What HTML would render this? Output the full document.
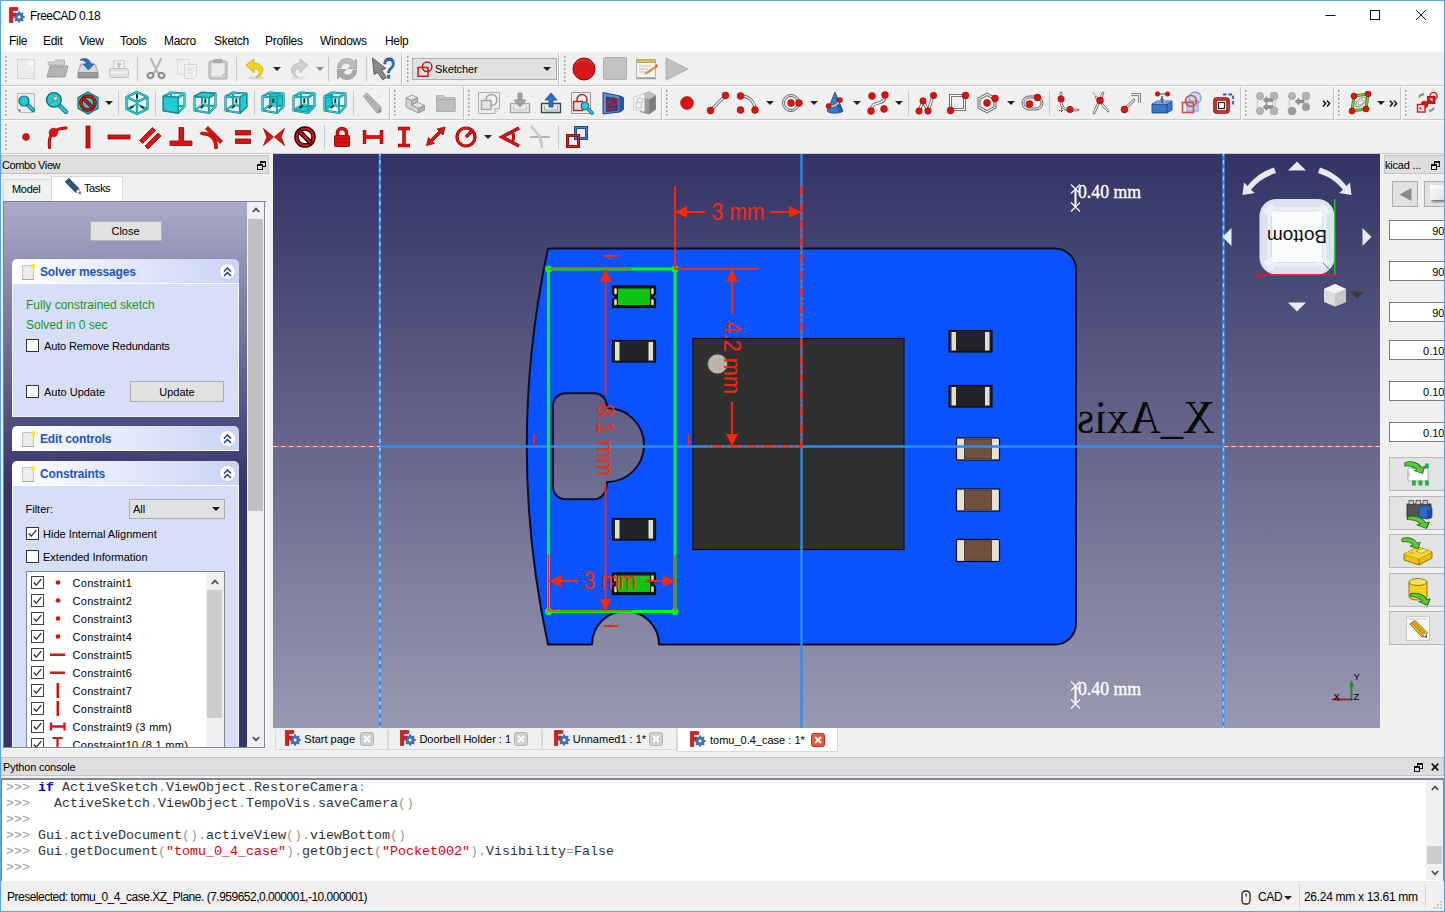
<!DOCTYPE html>
<html>
<head>
<meta charset="utf-8">
<title>FreeCAD 0.18</title>
<style>
*{box-sizing:border-box;margin:0;padding:0}
html,body{width:1445px;height:912px;overflow:hidden;background:#f0f0f0;font-family:"Liberation Sans",sans-serif;font-size:12px;color:#000}
.abs{position:absolute}
#win{position:absolute;left:0;top:0;width:1445px;height:912px;background:#f0f0f0;overflow:hidden}
#frame{position:absolute;left:0;top:0;width:1445px;height:912px;border:1px solid #5aa6ee;pointer-events:none;z-index:50}
#titlebar{position:absolute;left:0;top:0;width:1445px;height:30px;background:#fff}
#titlebar .t{position:absolute;left:30px;top:9px;font-size:12px;line-height:15px;letter-spacing:-0.55px}
#menubar{position:absolute;left:0;top:30px;width:1445px;height:22px;background:#fff}
#menubar span{position:absolute;top:4px;font-size:12px;line-height:15px;letter-spacing:-0.3px}
.tb{position:absolute;left:0;width:1445px;height:34px}
.grip{position:absolute;width:3px;height:27px;background:repeating-linear-gradient(180deg,#a2a2a2 0 2px,transparent 2px 4px) 0 0/1.5px 100% no-repeat,repeating-linear-gradient(180deg,transparent 0 1px,#fff 1px 2.5px,transparent 2.5px 4px) 1px 0/1.5px 100% no-repeat}
.sep{position:absolute;width:1px;height:24px;background:#c8c8c8}
.ic{position:absolute;width:24px;height:24px}
.dd{position:absolute;width:0;height:0;border-left:4px solid transparent;border-right:4px solid transparent;border-top:4px solid #222;margin-left:-0.5px}
/* docks */
.docktitle{position:absolute;background:#dedede;border:1px solid #c4c4c4;font-size:11px;line-height:15px}
.btn{position:absolute;background:#e1e1e1;border:1px solid #adadad;font-size:11px;text-align:center}
.cb{position:absolute;width:13px;height:13px;background:#fff;border:1px solid #333}
.inp{position:absolute;background:#fff;border:1px solid #7a7a7a;font-size:11px;text-align:right}
.t11{position:absolute;font-size:11px;line-height:14px;white-space:nowrap}
.box{position:absolute;left:12px;width:227px}
.boxhead{position:absolute;left:0;top:0;width:227px;height:25px;border-radius:5px 5px 0 0;background:linear-gradient(90deg,#ffffff 0%,#e6ebfb 45%,#c9d3f5 100%);border-bottom:1px solid #fff}
.boxhead b{position:absolute;left:28px;top:5.500px;letter-spacing:-0.15px;font-size:12px;line-height:14px;color:#1c54c8;font-weight:bold;white-space:nowrap}
.boxbody{position:absolute;left:0;top:25px;width:227px;background:#d6dff7;box-shadow:inset 1px 0 #f4f6ff,inset -1px 0 #f4f6ff,inset 0 -1px #f4f6ff}
.fold{position:absolute;right:3px;top:4px;width:17px;height:17px;border-radius:50%;background:#fff;border:1px solid #c6cce4}
.mono{position:absolute;left:6px;font-family:"Liberation Mono",monospace;font-size:13.33px;line-height:16px;white-space:pre;color:#333}
.mono i{font-style:normal;color:#9a9a9a}
.mono u{text-decoration:none;color:#e00000}
.mono b{color:#0000e0}
</style>
</head>
<body>
<div id="win">
<div id="titlebar">
<svg class="abs" style="left:7px;top:7px" width="19" height="17" viewBox="0 0 19 17"><path d="M2.400 0.500h8.400v3.100H5.800v2.700h3.200v2.600H5.800v6.600H2.400z" fill="#e01a1a" stroke="#8a0e0e" stroke-width="0.600" stroke-linejoin="round"/><path d="M12.10 4.30L13.52 6.58L16.13 5.97L15.52 8.58L17.80 10.00L15.52 11.42L16.13 14.03L13.52 13.42L12.10 15.70L10.68 13.42L8.07 14.03L8.68 11.42L6.40 10.00L8.68 8.58L8.07 5.97L10.68 6.58z" fill="#3f73b6" stroke="#234a86" stroke-width="0.600" stroke-linejoin="round"/><circle cx="12.100" cy="10" r="1.500" fill="#fff"/></svg>
<div class="t">FreeCAD 0.18</div>
<svg class="abs" style="left:1320px;top:5px" width="120" height="20" viewBox="0 0 120 20" fill="none" stroke="#111" stroke-width="1">
<path d="M5.5 10.5h10"/><rect x="50.500" y="5.500" width="9" height="9"/><path d="M96 5l10 10M106 5l-10 10"/>
</svg>
</div>

<div id="menubar">
<span style="left:9px">File</span><span style="left:43px">Edit</span><span style="left:79px">View</span><span style="left:120px">Tools</span><span style="left:164px">Macro</span><span style="left:214px">Sketch</span><span style="left:265px">Profiles</span><span style="left:320px">Windows</span><span style="left:385px">Help</span>
</div>

<div class="abs" style="left:0;top:52px;width:1445px;height:102px;background:#f0f0f0"></div>
<div class="abs" style="left:0;top:85px;width:1445px;height:1px;background:#c9c9c9"></div><div class="abs" style="left:0;top:86px;width:1445px;height:1px;background:#fbfbfb"></div>
<div class="abs" style="left:0;top:119px;width:1445px;height:1px;background:#c9c9c9"></div><div class="abs" style="left:0;top:120px;width:1445px;height:1px;background:#fbfbfb"></div>
<div class="abs" style="left:0;top:153px;width:1445px;height:1px;background:#c9c9c9"></div><div class="abs" style="left:0;top:154px;width:1445px;height:1px;background:#fbfbfb"></div>
<div class="grip" style="left:4.5px;top:56px"></div>
<svg class="ic" style="left:14px;top:57px;width:24px;height:24px" viewBox="0 0 24 24"><path d="M3.5 2.500h17v19h-17z" fill="#ececec" stroke="#d6d6d6"/><circle cx="17" cy="6" r="2.5" fill="#fafafa"/></svg>
<svg class="ic" style="left:45px;top:57px;width:24px;height:24px" viewBox="0 0 24 24"><path d="M3 5h6l1.500-2h9v5h-16z" fill="#cfcfcf" stroke="#aaa" stroke-width="0.8"/><path d="M2 20L5 9h18l-3 11z" fill="#b4b4b4" stroke="#909090" stroke-width="0.8"/></svg>
<svg class="ic" style="left:76px;top:57px;width:24px;height:24px" viewBox="0 0 24 24"><path d="M2 15l3-8h14l3 8v6H2z" fill="#d8d8d8" stroke="#8c8c8c" stroke-width="0.8"/><path d="M2.500 15.500h19v5h-19z" fill="#9c9c9c" stroke="#777" stroke-width="0.6"/><path d="M4 3c5-3 10-1 11 4h3l-5.500 6L7 7h3.500C10 4.500 7 3 4 3z" fill="#2b6fc4" stroke="#1b4f94" stroke-width="0.6"/></svg>
<svg class="ic" style="left:107px;top:57px;width:24px;height:24px" viewBox="0 0 24 24"><path d="M6.500 3.500h11v8h-11z" fill="#eee" stroke="#d0d0d0"/><path d="M12 5l3 3h-2v2.500h-2V8H9z" fill="#c4c4c4"/><rect x="2.500" y="11.500" width="19" height="9" rx="2" fill="#e0e0e0" stroke="#c4c4c4"/><path d="M4 15.500h16" stroke="#f8f8f8" stroke-width="1.5"/></svg>
<div class="sep" style="left:137px;top:57px"></div>
<svg class="ic" style="left:144px;top:57px;width:24px;height:24px" viewBox="0 0 24 24"><path d="M7 2l7 14M17 2L10 16" stroke="#b8b8b8" stroke-width="2.2" stroke-linecap="round"/><ellipse cx="6.500" cy="18.500" rx="3" ry="2.600" fill="none" stroke="#8a8a8a" stroke-width="2" transform="rotate(-25 6.500 18.500)"/><ellipse cx="17.500" cy="18.500" rx="3" ry="2.600" fill="none" stroke="#8a8a8a" stroke-width="2" transform="rotate(25 17.500 18.500)"/></svg>
<svg class="ic" style="left:175px;top:57px;width:24px;height:24px" viewBox="0 0 24 24"><path d="M2.500 2.500h12v15h-12z" fill="#efefef" stroke="#d8d8d8"/><path d="M9.500 7.500h12v11l-3 3h-9z" fill="#f1f1f1" stroke="#d4d4d4"/><path d="M12 11h7M12 13.500h7M12 16h6" stroke="#dadada" stroke-width="1.2"/></svg>
<svg class="ic" style="left:206px;top:57px;width:24px;height:24px" viewBox="0 0 24 24"><rect x="3" y="4" width="18" height="18" rx="1.5" fill="#c9c9c9" stroke="#aaa"/><path d="M5.500 6.500h13v13h-13z" fill="#ebebeb"/><path d="M8 2.500h8v3H8z" fill="#b0b0b0" stroke="#999" stroke-width="0.6"/><path d="M18.500 16v3.500H15z" fill="#bbb"/></svg>
<div class="sep" style="left:236px;top:57px"></div>
<svg class="ic" style="left:243px;top:57px;width:24px;height:24px" viewBox="0 0 24 24"><ellipse cx="13" cy="21" rx="8" ry="1.600" fill="#000" opacity="0.10"/><path d="M3 8l8-6v4c7 0 10 5 8 10-1 2.500-3 4-6 4.500 3-2 4-5 2.500-7-1-1.500-2.500-1.800-4.500-1.800v4z" fill="#f2d21e" stroke="#c9a800" stroke-width="0.8" stroke-linejoin="round"/></svg>
<div class="dd" style="left:273.5px;top:67px;border-top-color:#222"></div>
<svg class="ic" style="left:287px;top:57px;width:24px;height:24px" viewBox="0 0 24 24"><ellipse cx="11" cy="21" rx="8" ry="1.600" fill="#000" opacity="0.06"/><path d="M21 8l-8-6v4c-7 0-10 5-8 10 1 2.500 3 4 6 4.500-3-2-4-5-2.500-7 1-1.500 2.500-1.800 4.500-1.800v4z" fill="#cfcfcf" stroke="#b8b8b8" stroke-width="0.8" stroke-linejoin="round"/></svg>
<div class="dd" style="left:316.5px;top:67px;border-top-color:#8a8a8a"></div>
<div class="sep" style="left:328px;top:57px"></div>
<svg class="ic" style="left:335px;top:57px;width:24px;height:24px" viewBox="0 0 24 24"><path d="M2.500 11C2.500 5 7 1.500 12 1.500c3 0 5.500 1 7 3L21.500 2v9.500H13l2.800-2.800C14.800 7 13 6 11.500 6 8 6 6.500 8 6 11z" fill="#bcbcbc" stroke="#9c9c9c" stroke-width="0.7" stroke-linejoin="round"/><path d="M2.500 11C2.500 5 7 1.500 12 1.500c3 0 5.500 1 7 3L21.500 2v9.500H13l2.800-2.800C14.800 7 13 6 11.500 6 8 6 6.500 8 6 11z" fill="#a8a8a8" stroke="#909090" stroke-width="0.7" stroke-linejoin="round" transform="rotate(180 12 12)"/></svg>
<div class="sep" style="left:366px;top:57px"></div>
<svg class="ic" style="left:371px;top:56px;width:26px;height:26px" viewBox="0 0 24 24"><path d="M1.500 2l1.600 16.700 3.400-2.200 5.200 7.200 3.600-2-4.600-8 4.200-1.200z" fill="#878a85" stroke="#555753" stroke-width="0.9" stroke-linejoin="round" transform="scale(0.923)"/><text transform="translate(10.800 20.600) scale(0.740 1)" font-family="Liberation Sans,sans-serif" font-size="27.500" fill="#3b78c2" stroke="#1c3f78" stroke-width="0.7">?</text></svg>
<div class="abs" style="left:401px;top:53px;width:1px;height:33px;background:#c4c4c4"></div><div class="abs" style="left:402px;top:53px;width:1px;height:33px;background:#fff"></div>
<div class="grip" style="left:406.5px;top:56px"></div>
<div class="abs" style="left:412px;top:58px;width:145px;height:22px;background:#e1e1e1;border:1px solid #adadad"></div>
<svg class="abs" style="left:416px;top:61px" width="18" height="17" viewBox="0 0 18 17"><circle cx="11.100" cy="5.800" r="4.800" fill="none" stroke="#d01818" stroke-width="1.500"/><rect x="2" y="6.500" width="10" height="8.800" fill="none" stroke="#d01818" stroke-width="1.500"/></svg>
<div class="t11" style="left:435px;top:62px;font-size:11px;letter-spacing:-0.1px">Sketcher</div>
<div class="dd" style="left:543.5px;top:67px;border-top-color:#222"></div>
<div class="abs" style="left:558px;top:53px;width:1px;height:33px;background:#c4c4c4"></div><div class="abs" style="left:559px;top:53px;width:1px;height:33px;background:#fff"></div>
<div class="grip" style="left:563.5px;top:56px"></div>
<svg class="ic" style="left:572px;top:57px;width:24px;height:24px" viewBox="0 0 24 24"><circle cx="12" cy="12" r="11" fill="#d81818" stroke="#7c0c0c" stroke-width="1"/><path d="M4 8a9 9 0 0 1 16 0" fill="none" stroke="#f05050" stroke-width="1.5" opacity="0.5"/></svg>
<svg class="ic" style="left:603px;top:57px;width:24px;height:24px" viewBox="0 0 24 24"><rect x="0.500" y="0.500" width="23" height="22" rx="1" fill="#c2c2c2" stroke="#b0b0b0"/></svg>
<svg class="ic" style="left:633.5px;top:57px;width:24px;height:24px" viewBox="0 0 24 24"><path d="M2.500 4.500h19v16h-19z" fill="#f4f4f2" stroke="#b8b8b4"/><path d="M2.500 2.500h19v3h-19z" fill="#d6c060" stroke="#a89030" stroke-width="0.6"/><path d="M2 21.500h20" stroke="#a0a0a0" stroke-width="1.5"/><path d="M5 9h12M5 12h9M5 15h7" stroke="#c4c4c4"/><path d="M22.500 8.500l-9 6-3 2.500 3.800-1.200 9-6z" fill="#f0a020" stroke="#a86010" stroke-width="0.6"/><path d="M21.500 8l1.500 2 1-0.700-1.300-2z" fill="#d44"/></svg>
<svg class="ic" style="left:665px;top:57px;width:24px;height:24px" viewBox="0 0 24 24"><path d="M1 1l22 11L1 23z" fill="#c0c0c0" stroke="#aeaeae"/></svg>
<div class="grip" style="left:4.5px;top:89.5px"></div>
<svg class="ic" style="left:14px;top:90.5px;width:24px;height:24px" viewBox="0 0 24 24"><path d="M3.500 2.500h17v19h-14l-3-3z" fill="#ededed" stroke="#b9b9b9"/><path d="M3.500 18.500h3v3z" fill="#666"/><path d="M12 12l7 7" stroke="#0b6e76" stroke-width="4" stroke-linecap="round"/><path d="M12 12l7 7" stroke="#22ccd4" stroke-width="2.4" stroke-linecap="round"/><circle cx="10" cy="10" r="5" fill="#22ccd4" stroke="#0b6e76" stroke-width="1.2"/></svg>
<svg class="ic" style="left:44px;top:90px;width:25px;height:25px" viewBox="0 0 24 24"><path d="M13 13l8 8" stroke="#0b6e76" stroke-width="4.200" stroke-linecap="round"/><path d="M13 13l8 8" stroke="#22ccd4" stroke-width="2.600" stroke-linecap="round"/><circle cx="9.500" cy="9.500" r="7" fill="#22ccd4" stroke="#0b6e76" stroke-width="1.3"/><path d="M5 14l5-5-2.500-1 6-2.500-2 6-1-2.300-5 5z" fill="#eee" stroke="#666" stroke-width="0.6"/></svg>
<svg class="ic" style="left:75.5px;top:90.5px;width:24px;height:24px" viewBox="0 0 24 24"><path d="M12 1l10 5.500v11L12 23 2 17.500v-11z" fill="#22ccd4" stroke="#0b6e76" stroke-width="1.2"/><circle cx="12" cy="12" r="7" fill="none" stroke="#4a0000" stroke-width="3.400"/><circle cx="12" cy="12" r="7" fill="none" stroke="#d81010" stroke-width="2.200"/><path d="M7 7l10 10" stroke="#4a0000" stroke-width="3.400"/><path d="M7.300 7.300l9.400 9.400" stroke="#d81010" stroke-width="2.200"/></svg>
<div class="dd" style="left:105.5px;top:100.5px;border-top-color:#222"></div>
<div class="sep" style="left:118px;top:90.5px"></div>
<svg class="ic" style="left:124.5px;top:90.5px;width:24px;height:24px" viewBox="0 0 24 24"><path d="M12 1v12M12 13L1.500 18M12 13l10.500 5" fill="none" stroke="#17a8b0" stroke-width="1.600" stroke-linejoin="round"/><path d="M12 1v12M12 13L1.500 18M12 13l10.500 5" fill="none" stroke="#2cd6de" stroke-width="0.900" stroke-linejoin="round"/><path d="M12 4v2.500M5.500 17l2.500-1.500M18.500 17l-2.500-1.500" stroke="#0c2a2c" stroke-width="2" stroke-linecap="round"/><path d="M12 1l10.500 5v12L12 23 1.500 18V6zM1.500 6L12 11l10.500-5M12 11v12" fill="none" stroke="#0b6e76" stroke-width="2.200" stroke-linejoin="round"/><path d="M12 1l10.500 5v12L12 23 1.500 18V6zM1.500 6L12 11l10.500-5M12 11v12" fill="none" stroke="#2cd6de" stroke-width="1.200" stroke-linejoin="round"/></svg>
<div class="sep" style="left:155px;top:90.5px"></div>
<svg class="ic" style="left:161.5px;top:90.5px;width:24px;height:24px" viewBox="0 0 24 24"><path d="M9 1.5L22.5 2.5L22.5 15.5L9 14zM1.5 5.5L9 1.5M16 6.5L22.5 2.5M16 22L22.5 15.5M1.5 19.5L9 14" fill="none" stroke="#0b6e76" stroke-width="2.100" stroke-linejoin="round"/><path d="M9 1.5L22.5 2.5L22.5 15.5L9 14zM1.5 5.5L9 1.5M16 6.5L22.5 2.5M16 22L22.5 15.5M1.5 19.5L9 14" fill="none" stroke="#2cd6de" stroke-width="1.100" stroke-linejoin="round"/><path d="M1.5 5.5L16 6.5L16 22L1.5 19.5z" fill="none" stroke="#0b6e76" stroke-width="2.100" stroke-linejoin="round"/><path d="M1.5 5.5L16 6.5L16 22L1.5 19.5z" fill="none" stroke="#2cd6de" stroke-width="1.100" stroke-linejoin="round"/><path d="M1.5 5.5L16 6.5L16 22L1.5 19.5z" fill="#22ccd4" stroke="#0b6e76" stroke-width="0.700" stroke-linejoin="round"/></svg>
<svg class="ic" style="left:192.5px;top:90.5px;width:24px;height:24px" viewBox="0 0 24 24"><path d="M9 1.5L22.5 2.5L22.5 15.5L9 14zM1.5 5.5L9 1.5M16 6.5L22.5 2.5M16 22L22.5 15.5M1.5 19.5L9 14" fill="none" stroke="#0b6e76" stroke-width="2.100" stroke-linejoin="round"/><path d="M9 1.5L22.5 2.5L22.5 15.5L9 14zM1.5 5.5L9 1.5M16 6.5L22.5 2.5M16 22L22.5 15.5M1.5 19.5L9 14" fill="none" stroke="#2cd6de" stroke-width="1.100" stroke-linejoin="round"/><path d="M10.500 14.500L8.300 16.700" stroke="#0c2a2c" stroke-width="1.900" stroke-linecap="round"/><path d="M12.300 11.500V8.500" stroke="#0c2a2c" stroke-width="1.900" stroke-linecap="round"/><path d="M12.300 12.500l-1.500 1.500M12.500 12.800l3.500 1.700" stroke="#35d8e0" stroke-width="1.200" stroke-linecap="round"/><path d="M1.5 5.5L16 6.5L16 22L1.5 19.5z" fill="none" stroke="#0b6e76" stroke-width="2.100" stroke-linejoin="round"/><path d="M1.5 5.5L16 6.5L16 22L1.5 19.5z" fill="none" stroke="#2cd6de" stroke-width="1.100" stroke-linejoin="round"/><path d="M1.5 5.5L9 1.5L22.5 2.5L16 6.5z" fill="#22ccd4" stroke="#0b6e76" stroke-width="0.700" stroke-linejoin="round"/></svg>
<svg class="ic" style="left:223.5px;top:90.5px;width:24px;height:24px" viewBox="0 0 24 24"><path d="M9 1.5L22.5 2.5L22.5 15.5L9 14zM1.5 5.5L9 1.5M16 6.5L22.5 2.5M16 22L22.5 15.5M1.5 19.5L9 14" fill="none" stroke="#0b6e76" stroke-width="2.100" stroke-linejoin="round"/><path d="M9 1.5L22.5 2.5L22.5 15.5L9 14zM1.5 5.5L9 1.5M16 6.5L22.5 2.5M16 22L22.5 15.5M1.5 19.5L9 14" fill="none" stroke="#2cd6de" stroke-width="1.100" stroke-linejoin="round"/><path d="M10.500 14.500L8.300 16.700" stroke="#0c2a2c" stroke-width="1.900" stroke-linecap="round"/><path d="M12.300 11.500V8.500" stroke="#0c2a2c" stroke-width="1.900" stroke-linecap="round"/><path d="M12.300 12.500l-1.500 1.500M12.500 12.800l3.500 1.700" stroke="#35d8e0" stroke-width="1.200" stroke-linecap="round"/><path d="M1.5 5.5L16 6.5L16 22L1.5 19.5z" fill="none" stroke="#0b6e76" stroke-width="2.100" stroke-linejoin="round"/><path d="M1.5 5.5L16 6.5L16 22L1.5 19.5z" fill="none" stroke="#2cd6de" stroke-width="1.100" stroke-linejoin="round"/><path d="M16 6.5L22.5 2.5L22.5 15.5L16 22z" fill="#22ccd4" stroke="#0b6e76" stroke-width="0.700" stroke-linejoin="round"/></svg>
<div class="sep" style="left:254px;top:90.5px"></div>
<svg class="ic" style="left:260.5px;top:90.5px;width:24px;height:24px" viewBox="0 0 24 24"><path d="M9 1.5L22.5 2.5L22.5 15.5L9 14z" fill="#1fc4cc"/><path d="M9 1.5L22.5 2.5L22.5 15.5L9 14zM1.5 5.5L9 1.5M16 6.5L22.5 2.5M16 22L22.5 15.5M1.5 19.5L9 14" fill="none" stroke="#0b6e76" stroke-width="2.100" stroke-linejoin="round"/><path d="M9 1.5L22.5 2.5L22.5 15.5L9 14zM1.5 5.5L9 1.5M16 6.5L22.5 2.5M16 22L22.5 15.5M1.5 19.5L9 14" fill="none" stroke="#2cd6de" stroke-width="1.100" stroke-linejoin="round"/><path d="M10.500 14.500L8.300 16.700" stroke="#0c2a2c" stroke-width="1.900" stroke-linecap="round"/><path d="M12.300 11.500V8.500" stroke="#0c2a2c" stroke-width="1.900" stroke-linecap="round"/><path d="M12.300 12.500l-1.500 1.500M12.500 12.800l3.500 1.700" stroke="#35d8e0" stroke-width="1.200" stroke-linecap="round"/><path d="M1.5 5.5L16 6.5L16 22L1.5 19.5z" fill="none" stroke="#0b6e76" stroke-width="2.100" stroke-linejoin="round"/><path d="M1.5 5.5L16 6.5L16 22L1.5 19.5z" fill="none" stroke="#2cd6de" stroke-width="1.100" stroke-linejoin="round"/></svg>
<svg class="ic" style="left:291.5px;top:90.5px;width:24px;height:24px" viewBox="0 0 24 24"><path d="M1.5 19.5L9 14L22.5 15.5L16 22z" fill="#1fc4cc"/><path d="M9 1.5L22.5 2.5L22.5 15.5L9 14zM1.5 5.5L9 1.5M16 6.5L22.5 2.5M16 22L22.5 15.5M1.5 19.5L9 14" fill="none" stroke="#0b6e76" stroke-width="2.100" stroke-linejoin="round"/><path d="M9 1.5L22.5 2.5L22.5 15.5L9 14zM1.5 5.5L9 1.5M16 6.5L22.5 2.5M16 22L22.5 15.5M1.5 19.5L9 14" fill="none" stroke="#2cd6de" stroke-width="1.100" stroke-linejoin="round"/><path d="M10.500 14.500L8.300 16.700" stroke="#0c2a2c" stroke-width="1.900" stroke-linecap="round"/><path d="M12.300 11.500V8.500" stroke="#0c2a2c" stroke-width="1.900" stroke-linecap="round"/><path d="M12.300 12.500l-1.500 1.500M12.500 12.800l3.500 1.700" stroke="#35d8e0" stroke-width="1.200" stroke-linecap="round"/><path d="M1.5 5.5L16 6.5L16 22L1.5 19.5z" fill="none" stroke="#0b6e76" stroke-width="2.100" stroke-linejoin="round"/><path d="M1.5 5.5L16 6.5L16 22L1.5 19.5z" fill="none" stroke="#2cd6de" stroke-width="1.100" stroke-linejoin="round"/></svg>
<svg class="ic" style="left:322.5px;top:90.5px;width:24px;height:24px" viewBox="0 0 24 24"><path d="M1.5 5.5L9 1.5L9 14L1.5 19.5z" fill="#1fc4cc"/><path d="M9 1.5L22.5 2.5L22.5 15.5L9 14zM1.5 5.5L9 1.5M16 6.5L22.5 2.5M16 22L22.5 15.5M1.5 19.5L9 14" fill="none" stroke="#0b6e76" stroke-width="2.100" stroke-linejoin="round"/><path d="M9 1.5L22.5 2.5L22.5 15.5L9 14zM1.5 5.5L9 1.5M16 6.5L22.5 2.5M16 22L22.5 15.5M1.5 19.5L9 14" fill="none" stroke="#2cd6de" stroke-width="1.100" stroke-linejoin="round"/><path d="M10.500 14.500L8.300 16.700" stroke="#0c2a2c" stroke-width="1.900" stroke-linecap="round"/><path d="M12.300 11.500V8.500" stroke="#0c2a2c" stroke-width="1.900" stroke-linecap="round"/><path d="M12.300 12.500l-1.500 1.500M12.500 12.800l3.500 1.700" stroke="#35d8e0" stroke-width="1.200" stroke-linecap="round"/><path d="M1.5 5.5L16 6.5L16 22L1.5 19.5z" fill="none" stroke="#0b6e76" stroke-width="2.100" stroke-linejoin="round"/><path d="M1.5 5.5L16 6.5L16 22L1.5 19.5z" fill="none" stroke="#2cd6de" stroke-width="1.100" stroke-linejoin="round"/></svg>
<div class="sep" style="left:353px;top:90.5px"></div>
<svg class="ic" style="left:359px;top:90.5px;width:24px;height:24px" viewBox="0 0 24 24"><path d="M4 5l4-3 14 14v5l-4 1z" fill="#b4b4b4" stroke="#9a9a9a" stroke-width="0.7"/><path d="M18 22l4-1v-5" fill="#8e8e8e"/><path d="M9 5l-1.500 1.500M11.500 7.500L10 9M14 10l-1.500 1.500M16.500 12.500L15 14" stroke="#888" stroke-width="0.9"/></svg>
<div class="abs" style="left:389px;top:87px;width:1px;height:33px;background:#c4c4c4"></div><div class="abs" style="left:390px;top:87px;width:1px;height:33px;background:#fff"></div>
<div class="grip" style="left:393.5px;top:89.5px"></div>
<svg class="ic" style="left:402.5px;top:90.5px;width:24px;height:24px" viewBox="0 0 24 24"><g stroke="#8c8c8c" stroke-width="0.8" stroke-linejoin="round"><path d="M3 7l6-3 5.500 2.500-6 3z" fill="#e6e6e6"/><path d="M8.500 9.500l6-3V11l-6 3z" fill="#bdbdbd"/><path d="M8.500 14l6-3 7 3.500-6 3z" fill="#e0e0e0"/><path d="M3 7l5.500 2.500V14l7 3.500V22L3 16z" fill="#d2d2d2"/><path d="M15.500 17.500l6-3V19l-6 3z" fill="#b0b0b0"/></g></svg>
<svg class="ic" style="left:434px;top:90.5px;width:24px;height:24px" viewBox="0 0 24 24"><path d="M2.500 4.500h7l1.500 2h10v14h-18.500z" fill="#c2c2c2" stroke="#b0b0b0"/><path d="M2.500 8.500h18.500v12h-18.500z" fill="#bdbdbd" stroke="#adadad"/></svg>
<div class="abs" style="left:463px;top:87px;width:1px;height:33px;background:#c4c4c4"></div><div class="abs" style="left:464px;top:87px;width:1px;height:33px;background:#fff"></div>
<div class="grip" style="left:467.5px;top:89.5px"></div>
<svg class="ic" style="left:476.5px;top:90.5px;width:24px;height:24px" viewBox="0 0 24 24"><path d="M1.500 1.500h21v16l-4.500 5h-16.500z" fill="#efefef" stroke="#b0b0b0"/><path d="M18 22.500v-5h4.500" fill="#dcdcdc" stroke="#b0b0b0"/><circle cx="14.500" cy="9" r="5.500" fill="#f0f0f0" stroke="#a0a0a0" stroke-width="1.400"/><rect x="4.500" y="9.500" width="9.500" height="9" fill="#e2e2e2" stroke="#a0a0a0" stroke-width="1.400"/></svg>
<svg class="ic" style="left:507.5px;top:90.5px;width:24px;height:24px" viewBox="0 0 24 24"><path d="M2.500 12.500h19v9h-19z" fill="#eaeaea" stroke="#a8a8a8" stroke-width="1.4"/><path d="M5.500 15v4h13v-4" fill="none" stroke="#c4c4c4"/><path d="M10 2h4v7h4l-6 7-6-7h4z" fill="#a2a2a2" stroke="#8a8a8a" stroke-width="0.7"/></svg>
<svg class="ic" style="left:538.5px;top:90.5px;width:24px;height:24px" viewBox="0 0 24 24"><path d="M2.500 12.500h19v9h-19z" fill="#eaeaea" stroke="#3a4a52" stroke-width="1.4"/><path d="M5.500 15v4h13v-4" fill="none" stroke="#9aa"/><path d="M10 16h4V9h4l-6-7-6 7h4z" fill="#2c72c8" stroke="#184a8c" stroke-width="0.8"/></svg>
<svg class="ic" style="left:570px;top:90.5px;width:24px;height:24px" viewBox="0 0 24 24"><path d="M1.500 1.500h19v21h-19z" fill="#f4f4f4" stroke="#999"/><circle cx="12" cy="8.500" r="5" fill="none" stroke="#d01818" stroke-width="1.4"/><rect x="3.500" y="10.500" width="9" height="9" fill="#e0e0e0" stroke="#d01818" stroke-width="1.4"/><path d="M17 17l5 5" stroke="#0b6e76" stroke-width="3.600" stroke-linecap="round"/><path d="M17 17l5 5" stroke="#22ccd4" stroke-width="2" stroke-linecap="round"/><circle cx="15" cy="15" r="4" fill="#22ccd4" stroke="#0b6e76" stroke-width="1"/></svg>
<svg class="ic" style="left:601px;top:90.5px;width:24px;height:24px" viewBox="0 0 24 24"><path d="M2 1.500l17 3.500v16L2 23z" fill="#5b8dd6" stroke="#1c3c74" stroke-width="0.9" stroke-linejoin="round"/><path d="M19 5l3.500 1.500v12L19 21z" fill="#2a5aa4" stroke="#1c3c74" stroke-width="0.8"/><path d="M5.500 6l11 2v11.500l-11 1z" fill="#1f4484" stroke="#16305e" stroke-width="0.7"/><path d="M16.500 8l2.500 1v9.500l-2.500 1z" fill="#3d6fbc"/><circle cx="12" cy="10.500" r="3.800" fill="none" stroke="#d81818" stroke-width="1.300"/><rect x="6" y="11.500" width="6.500" height="6.500" fill="none" stroke="#d81818" stroke-width="1.300" transform="skewY(3) translate(0 -0.500)"/></svg>
<svg class="ic" style="left:631.5px;top:90.5px;width:24px;height:24px" viewBox="0 0 24 24"><path d="M8 4.500l9-3.500 6.500 3.500v14L17 23l-9-2.500z" fill="#9a9a9a" stroke="#7e7e7e" stroke-width="0.700" stroke-linejoin="round"/><path d="M17 8.500l6.500-4v14L17 23z" fill="#7c7c7c"/><path d="M8 4.500l9 4 6.500-4L17 1z" fill="#c2c2c2"/><path d="M1.500 6l11-3v17.500l-11-2z" fill="#f3f3f3" stroke="#cacaca" stroke-width="0.800"/><circle cx="8" cy="9.500" r="2.800" fill="none" stroke="#c4c4c4" stroke-width="1.100"/><rect x="4" y="11.500" width="5.500" height="5.500" fill="#f3f3f3" stroke="#c4c4c4" stroke-width="1.100"/></svg>
<div class="abs" style="left:661px;top:87px;width:1px;height:33px;background:#c4c4c4"></div><div class="abs" style="left:662px;top:87px;width:1px;height:33px;background:#fff"></div>
<div class="grip" style="left:665.5px;top:89.5px"></div>
<svg class="ic" style="left:675px;top:90.5px;width:24px;height:24px" viewBox="0 0 24 24"><circle cx="12" cy="12" r="6.4" fill="#e01010" stroke="#8a0606" stroke-width="0.6"/></svg>
<svg class="ic" style="left:706px;top:90.5px;width:24px;height:24px" viewBox="0 0 24 24"><path d="M5 19L19 5" fill="none" stroke="#555" stroke-width="3.0" stroke-linecap="round" stroke-linejoin="round"/><path d="M5 19L19 5" fill="none" stroke="#f4f4f4" stroke-width="1.6" stroke-linecap="round" stroke-linejoin="round"/><circle cx="4.5" cy="19.5" r="3.4" fill="#e01010" stroke="#8a0606" stroke-width="0.6"/><circle cx="19.5" cy="4.5" r="3.4" fill="#e01010" stroke="#8a0606" stroke-width="0.6"/></svg>
<svg class="ic" style="left:736px;top:90.5px;width:24px;height:24px" viewBox="0 0 24 24"><path d="M5 5C13 5 19 11 19 19" fill="none" stroke="#555" stroke-width="3.0" stroke-linecap="round" stroke-linejoin="round"/><path d="M5 5C13 5 19 11 19 19" fill="none" stroke="#f4f4f4" stroke-width="1.6" stroke-linecap="round" stroke-linejoin="round"/><circle cx="4.5" cy="5" r="3.4" fill="#e01010" stroke="#8a0606" stroke-width="0.6"/><circle cx="4.5" cy="19" r="3.4" fill="#e01010" stroke="#8a0606" stroke-width="0.6"/><circle cx="19" cy="19" r="3.4" fill="#e01010" stroke="#8a0606" stroke-width="0.6"/></svg>
<div class="dd" style="left:766.5px;top:100.5px;border-top-color:#222"></div>
<svg class="ic" style="left:781px;top:90.5px;width:24px;height:24px" viewBox="0 0 24 24"><circle cx="10" cy="12" r="8.500" fill="none" stroke="#555" stroke-width="0.9"/><circle cx="10" cy="12" r="6.500" fill="none" stroke="#555" stroke-width="0.9"/><circle cx="10" cy="12" r="3.4" fill="#e01010" stroke="#8a0606" stroke-width="0.6"/><circle cx="18" cy="12" r="3.4" fill="#e01010" stroke="#8a0606" stroke-width="0.6"/></svg>
<div class="dd" style="left:810px;top:100.5px;border-top-color:#222"></div>
<svg class="ic" style="left:823px;top:90.5px;width:24px;height:24px" viewBox="0 0 24 24"><path d="M12 1L4 20c2 3 14 3 16 0z" fill="#3a78c8" stroke="#1c4a8c" stroke-width="0.8"/><path d="M12 1l3 20c3-.5 4.500-.8 5-1z" fill="#2a5ea8"/><path d="M6 15c5 1 9-2 11-6" fill="none" stroke="#555" stroke-width="2.6" stroke-linecap="round" stroke-linejoin="round"/><path d="M6 15c5 1 9-2 11-6" fill="none" stroke="#f4f4f4" stroke-width="1.2000000000000002" stroke-linecap="round" stroke-linejoin="round"/><circle cx="5.5" cy="15" r="2.5" fill="#e01010" stroke="#8a0606" stroke-width="0.6"/><circle cx="17" cy="9" r="2.5" fill="#e01010" stroke="#8a0606" stroke-width="0.6"/></svg>
<div class="dd" style="left:853px;top:100.5px;border-top-color:#222"></div>
<svg class="ic" style="left:866px;top:90.5px;width:24px;height:24px" viewBox="0 0 24 24"><path d="M5 20c0-12 14-4 14-15" fill="none" stroke="#555" stroke-width="3.0" stroke-linecap="round" stroke-linejoin="round"/><path d="M5 20c0-12 14-4 14-15" fill="none" stroke="#f4f4f4" stroke-width="1.6" stroke-linecap="round" stroke-linejoin="round"/><circle cx="6" cy="5" r="3.4" fill="#e01010" stroke="#8a0606" stroke-width="0.6"/><circle cx="19" cy="4" r="3.4" fill="#e01010" stroke="#8a0606" stroke-width="0.6"/><circle cx="5" cy="20" r="3.4" fill="#e01010" stroke="#8a0606" stroke-width="0.6"/><circle cx="18" cy="18" r="3.4" fill="#e01010" stroke="#8a0606" stroke-width="0.6"/></svg>
<div class="dd" style="left:895.5px;top:100.5px;border-top-color:#222"></div>
<div class="sep" style="left:908px;top:90.5px"></div>
<svg class="ic" style="left:915px;top:90.5px;width:24px;height:24px" viewBox="0 0 24 24"><path d="M4 20L8 10l5 10 5-15" fill="none" stroke="#555" stroke-width="3.0" stroke-linecap="round" stroke-linejoin="round"/><path d="M4 20L8 10l5 10 5-15" fill="none" stroke="#f4f4f4" stroke-width="1.6" stroke-linecap="round" stroke-linejoin="round"/><circle cx="4" cy="20" r="3.2" fill="#e01010" stroke="#8a0606" stroke-width="0.6"/><circle cx="8" cy="10" r="3.2" fill="#e01010" stroke="#8a0606" stroke-width="0.6"/><circle cx="13" cy="20" r="3.2" fill="#e01010" stroke="#8a0606" stroke-width="0.6"/><circle cx="18.5" cy="4.5" r="3.2" fill="#e01010" stroke="#8a0606" stroke-width="0.6"/></svg>
<svg class="ic" style="left:946px;top:90.5px;width:24px;height:24px" viewBox="0 0 24 24"><path d="M4.500 4.500h14v14h-14z" fill="none" stroke="#555" stroke-width="3"/><path d="M4.500 4.500h14v14h-14z" fill="none" stroke="#f4f4f4" stroke-width="1.400"/><circle cx="4.5" cy="19.5" r="3.4" fill="#e01010" stroke="#8a0606" stroke-width="0.6"/><circle cx="19.5" cy="4.5" r="3.4" fill="#e01010" stroke="#8a0606" stroke-width="0.6"/></svg>
<svg class="ic" style="left:977px;top:90.5px;width:24px;height:24px" viewBox="0 0 24 24"><path d="M10 2l9 5v10l-9 5-9-5V7z" fill="none" stroke="#555" stroke-width="0.9"/><path d="M10 4.500l7 3.800v7.400l-7 3.800-7-3.800V8.300z" fill="none" stroke="#555" stroke-width="0.9"/><circle cx="10" cy="12" r="3.4" fill="#e01010" stroke="#8a0606" stroke-width="0.6"/><circle cx="18" cy="7.5" r="3.4" fill="#e01010" stroke="#8a0606" stroke-width="0.6"/></svg>
<div class="dd" style="left:1007px;top:100.5px;border-top-color:#222"></div>
<svg class="ic" style="left:1019.5px;top:90.5px;width:24px;height:24px" viewBox="0 0 24 24"><rect x="2" y="5" width="21" height="14" rx="7" fill="none" stroke="#555" stroke-width="0.9"/><rect x="4" y="7" width="17" height="10" rx="5" fill="none" stroke="#555" stroke-width="0.9"/><circle cx="9.5" cy="13" r="3.4" fill="#e01010" stroke="#8a0606" stroke-width="0.6"/><circle cx="17.5" cy="6.5" r="3.4" fill="#e01010" stroke="#8a0606" stroke-width="0.6"/></svg>
<div class="sep" style="left:1049px;top:90.5px"></div>
<svg class="ic" style="left:1056px;top:90.5px;width:24px;height:24px" viewBox="0 0 24 24"><path d="M5 2v8c0 6 4 9 9 9h8" fill="none" stroke="#555" stroke-width="2.6" stroke-linecap="round" stroke-linejoin="round"/><path d="M5 2v8c0 6 4 9 9 9h8" fill="none" stroke="#f4f4f4" stroke-width="1.2000000000000002" stroke-linecap="round" stroke-linejoin="round"/><path d="M3 19.500h5M5.500 17v5" stroke="#444" stroke-width="0.9" stroke-dasharray="1.500 1"/><circle cx="5" cy="8" r="3.2" fill="#e01010" stroke="#8a0606" stroke-width="0.6"/><circle cx="14" cy="18.5" r="3.2" fill="#e01010" stroke="#8a0606" stroke-width="0.6"/></svg>
<svg class="ic" style="left:1087px;top:90.5px;width:24px;height:24px" viewBox="0 0 24 24"><path d="M16 2L7 22" fill="none" stroke="#555" stroke-width="2.6" stroke-linecap="round" stroke-linejoin="round"/><path d="M16 2L7 22" fill="none" stroke="#f4f4f4" stroke-width="1.2000000000000002" stroke-linecap="round" stroke-linejoin="round"/><path d="M9 6L21 20" fill="none" stroke="#555" stroke-width="2.6" stroke-linecap="round" stroke-linejoin="round"/><path d="M9 6L21 20" fill="none" stroke="#f4f4f4" stroke-width="1.2000000000000002" stroke-linecap="round" stroke-linejoin="round"/><path d="M6 1.500l2 2.500" stroke="#555" stroke-width="1" stroke-dasharray="1.500 1"/><circle cx="13" cy="9.5" r="3.4" fill="#e01010" stroke="#8a0606" stroke-width="0.6"/></svg>
<svg class="ic" style="left:1119px;top:90.5px;width:24px;height:24px" viewBox="0 0 24 24"><path d="M8 16l7-7" fill="none" stroke="#555" stroke-width="2.6" stroke-linecap="round" stroke-linejoin="round"/><path d="M8 16l7-7" fill="none" stroke="#f4f4f4" stroke-width="1.2000000000000002" stroke-linecap="round" stroke-linejoin="round"/><path d="M12 3.500h8.500V12" fill="none" stroke="#666" stroke-width="2.800"/><path d="M12 3.500h8.500V12" fill="none" stroke="#f4f4f4" stroke-width="1.300"/><circle cx="5.5" cy="18.5" r="3.4" fill="#e01010" stroke="#8a0606" stroke-width="0.6"/></svg>
<svg class="ic" style="left:1149.5px;top:90.5px;width:24px;height:24px" viewBox="0 0 24 24"><path d="M2 13l5-3h15v9l-5 3H2z" fill="#3a78c8" stroke="#173e78" stroke-width="0.8"/><path d="M2 13h15v9M17 13l5-3" fill="none" stroke="#173e78" stroke-width="0.8"/><path d="M2 13l5-3h15l-5 3z" fill="#6aa0e0"/><path d="M12 12V5M8 3h9" stroke="#444" stroke-width="1.200"/><path d="M12 6l-2 3h4z" fill="#2a5ea8"/><circle cx="7.5" cy="3" r="2.2" fill="#e01010" stroke="#8a0606" stroke-width="0.6"/><circle cx="17.5" cy="3" r="2.2" fill="#e01010" stroke="#8a0606" stroke-width="0.6"/></svg>
<svg class="ic" style="left:1180px;top:90.5px;width:24px;height:24px" viewBox="0 0 24 24"><circle cx="15" cy="7" r="6" fill="#c8d8f8" stroke="#7a9ae8" stroke-width="1.300" opacity="0.9"/><rect x="7" y="10" width="11" height="10" fill="#b0c8f4" stroke="#7a9ae8" stroke-width="1.300" opacity="0.8"/><circle cx="11" cy="10" r="5.500" fill="none" stroke="#d05050" stroke-width="1.600"/><rect x="2.500" y="11.500" width="11" height="10" fill="none" stroke="#d05050" stroke-width="1.600"/></svg>
<svg class="ic" style="left:1212px;top:90.5px;width:24px;height:24px" viewBox="0 0 24 24"><path d="M11 3.500h10v10" fill="none" stroke="#2a5aa8" stroke-width="1.800" stroke-dasharray="3.500 2"/><rect x="3" y="8" width="13" height="13" rx="2" fill="#fff" stroke="#8a0a0a" stroke-width="3.600"/><rect x="3" y="8" width="13" height="13" rx="2" fill="none" stroke="#d03030" stroke-width="1.800"/><rect x="6.500" y="11.500" width="6" height="6" fill="#fff" stroke="#222" stroke-width="1.200"/></svg>
<div class="abs" style="left:1240px;top:87px;width:1px;height:33px;background:#c4c4c4"></div><div class="abs" style="left:1241px;top:87px;width:1px;height:33px;background:#fff"></div>
<div class="grip" style="left:1244.5px;top:89.5px"></div>
<svg class="ic" style="left:1255px;top:90.5px;width:24px;height:24px" viewBox="0 0 24 24"><path d="M4.500 6c-3 4-3 9 0 13M18 6v13M20.500 6v13" fill="none" stroke="#c8c8c8" stroke-width="1.100"/><path d="M16 9h-6v-2l-4 3.500 4 3.500v-2h6zM16 16h-6v-2l-4 3.500 4 3.500v-2h6z" fill="#909090" stroke="#7c7c7c" stroke-width="0.500" transform="translate(2 -1.500)"/><g fill="#b4b4b4" stroke="#9c9c9c" stroke-width="0.700"><circle cx="5" cy="5" r="3.600"/><circle cx="5" cy="20" r="3.600"/><rect x="15.500" y="1.500" width="7" height="7" rx="2"/><rect x="15.500" y="16.500" width="7" height="7" rx="2"/></g></svg>
<svg class="ic" style="left:1286.5px;top:90.5px;width:24px;height:24px" viewBox="0 0 24 24"><path d="M4.500 6c-3 4-3 9 0 13M18 6v10M20.500 6v10" fill="none" stroke="#c8c8c8" stroke-width="1.100"/><path d="M16 9h-5v-2l-4 3.500 4 3.500v-2h5z" fill="#909090" stroke="#7c7c7c" stroke-width="0.500" transform="translate(1 0)"/><g stroke="#9c9c9c" stroke-width="0.700"><circle cx="5" cy="5" r="3.600" fill="#b4b4b4"/><circle cx="5" cy="20" r="4" fill="#9a9a9a"/><rect x="15.500" y="1.500" width="7" height="7" rx="2" fill="#b4b4b4"/><circle cx="19" cy="16" r="3.800" fill="#9a9a9a"/></g></svg>
<svg class="abs" style="left:1321.5px;top:99.5px" width="9" height="7.200" viewBox="0 0 10 8" fill="none" stroke="#111" stroke-width="1.600"><path d="M1 0.800l3 3.200-3 3.200M5.500 0.800l3 3.200-3 3.200"/></svg>
<div class="abs" style="left:1333px;top:87px;width:1px;height:33px;background:#c4c4c4"></div><div class="abs" style="left:1334px;top:87px;width:1px;height:33px;background:#fff"></div>
<div class="grip" style="left:1337.5px;top:89.5px"></div>
<svg class="ic" style="left:1347.5px;top:90.5px;width:24px;height:24px" viewBox="0 0 24 24"><path d="M6 5l14-2-2 15-14 2z" fill="#e4e4e4" stroke="#3a8a10" stroke-width="3"/><path d="M6 5l14-2-2 15-14 2z" fill="none" stroke="#7ad030" stroke-width="1.400"/><path d="M8 15.500c-1.500-4 5-10.500 9.500-8.500 1.500 3-4 10-9.500 8.500z" fill="#fff" stroke="#6a6a6a" stroke-width="0.800"/><path d="M10 14c-0.500-2.500 3.500-6 6-5 0.500 2-3 5.500-6 5z" fill="#f8f8f8" stroke="#808080" stroke-width="0.700"/><circle cx="6" cy="5" r="3" fill="#e01010" stroke="#8a0606" stroke-width="0.6"/><circle cx="20" cy="3" r="3" fill="#e01010" stroke="#8a0606" stroke-width="0.6"/><circle cx="18" cy="18" r="3" fill="#e01010" stroke="#8a0606" stroke-width="0.6"/><circle cx="4" cy="20" r="3" fill="#e01010" stroke="#8a0606" stroke-width="0.6"/></svg>
<div class="dd" style="left:1377px;top:100.5px;border-top-color:#222"></div>
<svg class="abs" style="left:1389px;top:99.5px" width="9" height="7.200" viewBox="0 0 10 8" fill="none" stroke="#111" stroke-width="1.600"><path d="M1 0.800l3 3.200-3 3.200M5.500 0.800l3 3.200-3 3.200"/></svg>
<div class="abs" style="left:1400px;top:87px;width:1px;height:33px;background:#c4c4c4"></div><div class="abs" style="left:1401px;top:87px;width:1px;height:33px;background:#fff"></div>
<div class="grip" style="left:1404.5px;top:89.5px"></div>
<svg class="ic" style="left:1414px;top:90.5px;width:24px;height:24px" viewBox="0 0 24 24"><path d="M5 6.500c0.500-2 2-3 4-3l-0.500-1.500M20 16.500c-0.500 2-2 3-4 3l0.500 1.500" fill="none" stroke="#8a8a8a" stroke-width="1.800"/><circle cx="19.500" cy="5" r="3.600" fill="#f4d8d8" stroke="#d01818" stroke-width="1.300"/><rect x="13.500" y="5.500" width="7.500" height="7" fill="#d01818" stroke="#a00000" stroke-width="0.800"/><path d="M15.500 7.500h3v3z" fill="#fff"/><circle cx="10.500" cy="13.500" r="3.800" fill="#d01818"/><rect x="3.500" y="13.500" width="7.500" height="7.500" fill="#f8ecec" stroke="#d01818" stroke-width="1.400"/><path d="M5.500 15.500h3v3z" fill="#d01818" transform="rotate(180 7 17)"/></svg>
<div class="grip" style="left:4.5px;top:123.5px"></div>
<svg class="ic" style="left:14px;top:124.5px;width:24px;height:24px" viewBox="0 0 24 24"><circle cx="12" cy="12" r="3.4" fill="#e01010" stroke="#8a0606" stroke-width="0.6"/></svg>
<svg class="ic" style="left:45px;top:124.5px;width:24px;height:24px" viewBox="0 0 24 24"><path d="M4.500 22.500C3 10 8 3.500 21 3" fill="none" stroke="#8a0606" stroke-width="3" stroke-linecap="round"/><path d="M4.500 22.500C3 10 8 3.500 21 3" fill="none" stroke="#e01010" stroke-width="2" stroke-linecap="round"/><circle cx="8.5" cy="7.5" r="4.3" fill="#e01010" stroke="#8a0606" stroke-width="0.6"/></svg>
<svg class="ic" style="left:76px;top:124.5px;width:24px;height:24px" viewBox="0 0 24 24"><rect x="10" y="1" width="4" height="22" fill="#e01010" stroke="#8a0606" stroke-width="0.8"/></svg>
<svg class="ic" style="left:107px;top:124.5px;width:24px;height:24px" viewBox="0 0 24 24"><rect x="1" y="10" width="22" height="4" fill="#e01010" stroke="#8a0606" stroke-width="0.8"/></svg>
<svg class="ic" style="left:138px;top:124.5px;width:24px;height:24px" viewBox="0 0 24 24"><path d="M1.500 15.500L14.500 2.500l3 3L4.500 18.500zM7 21L20 8l3 3L10 24z" fill="#e01010" stroke="#8a0606" stroke-width="0.8"/></svg>
<svg class="ic" style="left:169px;top:124.5px;width:24px;height:24px" viewBox="0 0 24 24"><path d="M10 2.500h4.500V16H23v4.500H1V16h9z" fill="#e01010" stroke="#8a0606" stroke-width="0.8"/></svg>
<svg class="ic" style="left:200px;top:124.5px;width:24px;height:24px" viewBox="0 0 24 24"><path d="M8 1.500l14.500 14.500-2.500 2.500L5.500 4z" fill="#e01010" stroke="#8a0606" stroke-width="0.8"/><path d="M2 8.500c9 0 14 5 14 14" fill="none" stroke="#8a0606" stroke-width="3.600" stroke-linecap="round"/><path d="M2 8.500c9 0 14 5 14 14" fill="none" stroke="#e01010" stroke-width="2.600" stroke-linecap="round"/></svg>
<svg class="ic" style="left:231px;top:124.5px;width:24px;height:24px" viewBox="0 0 24 24"><path d="M4.500 5.500h15v4.500h-15zM4.500 14h15v4.500h-15z" fill="#e01010" stroke="#8a0606" stroke-width="0.8"/></svg>
<svg class="ic" style="left:262px;top:124.5px;width:24px;height:24px" viewBox="0 0 24 24"><path d="M1.500 3.500l10 8.500-10 8.500 3.500-8.500zM22.500 3.500l-10 8.500 10 8.500-3.500-8.500z" fill="#e01010" stroke="#8a0606" stroke-width="0.8" stroke-linejoin="round"/></svg>
<svg class="ic" style="left:292.5px;top:124.5px;width:24px;height:24px" viewBox="0 0 24 24"><circle cx="12" cy="12" r="8.500" fill="#fff" stroke="#1a0000" stroke-width="4.600"/><circle cx="12" cy="12" r="8.500" fill="none" stroke="#d81010" stroke-width="2.200"/><path d="M6 6l12 12" stroke="#1a0000" stroke-width="4.600"/><path d="M6.500 6.500l11 11" stroke="#d81010" stroke-width="2.200"/></svg>
<div class="sep" style="left:324px;top:124.5px"></div>
<svg class="ic" style="left:329.5px;top:124.5px;width:24px;height:24px" viewBox="0 0 24 24"><path d="M7.500 11V8a4.500 4.500 0 0 1 9 0v3" fill="none" stroke="#8a0606" stroke-width="3.400"/><path d="M7.500 11V8a4.500 4.500 0 0 1 9 0v3" fill="none" stroke="#e01010" stroke-width="2.200"/><rect x="4.500" y="10.500" width="15" height="11" rx="1" fill="#e01010" stroke="#8a0606" stroke-width="0.9"/><path d="M5.500 14h13M5.500 17.500h13" stroke="#8a0606" stroke-width="0.8" opacity="0.7"/></svg>
<svg class="ic" style="left:360.5px;top:124.5px;width:24px;height:24px" viewBox="0 0 24 24"><path d="M3.500 5v14M20.500 5v14M3.500 12h17" fill="none" stroke="#8a0606" stroke-width="3.400"/><path d="M3.500 5.500v13M20.500 5.500v13M3.500 12h17" fill="none" stroke="#e01010" stroke-width="2.300"/></svg>
<svg class="ic" style="left:391.5px;top:124.5px;width:24px;height:24px" viewBox="0 0 24 24"><path d="M6 3.500h12M6 20.500h12M12 3.500v17" fill="none" stroke="#8a0606" stroke-width="3.400"/><path d="M6.500 3.500h11M6.500 20.500h11M12 3.500v17" fill="none" stroke="#e01010" stroke-width="2.300"/></svg>
<svg class="ic" style="left:423px;top:124.5px;width:24px;height:24px" viewBox="0 0 24 24"><path d="M22 2l-2 8-2-2-8.500 8.500 2 2-8 2 2-8 2 2L16 6l-2-2z" fill="#e01010" stroke="#8a0606" stroke-width="0.8" stroke-linejoin="round"/></svg>
<svg class="ic" style="left:454px;top:124.5px;width:24px;height:24px" viewBox="0 0 24 24"><circle cx="12" cy="12" r="9" fill="none" stroke="#8a0606" stroke-width="3.200"/><circle cx="12" cy="12" r="9" fill="none" stroke="#e01010" stroke-width="2"/><path d="M12 12l6-6" stroke="#8a0606" stroke-width="3.200"/><path d="M12 12l5.600-5.600" stroke="#e01010" stroke-width="2"/></svg>
<div class="dd" style="left:484px;top:134.5px;border-top-color:#222"></div>
<svg class="ic" style="left:497.5px;top:124.5px;width:24px;height:24px" viewBox="0 0 24 24"><path d="M21 3L4 12l17 9" fill="none" stroke="#8a0606" stroke-width="3.400" stroke-linejoin="miter"/><path d="M21 3L4 12l17 9" fill="none" stroke="#e01010" stroke-width="2.200"/><path d="M14 6.500c2 3 2 8 0 11" fill="none" stroke="#8a0606" stroke-width="3"/><path d="M14 6.500c2 3 2 8 0 11" fill="none" stroke="#e01010" stroke-width="1.800"/></svg>
<svg class="ic" style="left:528px;top:124.5px;width:24px;height:24px" viewBox="0 0 24 24"><path d="M2 12h20" stroke="#b4b4b4" stroke-width="2"/><path d="M4 2l8 10 2 10" fill="none" stroke="#c8c8c8" stroke-width="2.600" stroke-linecap="round"/></svg>
<div class="sep" style="left:558px;top:124.5px"></div>
<svg class="ic" style="left:565px;top:124.5px;width:24px;height:24px" viewBox="0 0 24 24"><rect x="10.500" y="2.500" width="11" height="11" fill="#f0f0f0" stroke="#1a3a78" stroke-width="3"/><rect x="10.500" y="2.500" width="11" height="11" fill="none" stroke="#4a80d0" stroke-width="1.500"/><rect x="2.500" y="10.500" width="11" height="11" fill="none" stroke="#7a0808" stroke-width="3"/><rect x="2.500" y="10.500" width="11" height="11" fill="none" stroke="#e02020" stroke-width="1.500"/></svg>

<div class="docktitle" style="left:1px;top:155px;width:268px;height:19px"><span class="abs" style="left:0px;top:2px;letter-spacing:-0.4px">Combo View</span><svg class="abs" style="left:255px;top:4.500px" width="9" height="9" viewBox="0 0 9 9" shape-rendering="crispEdges"><path d="M3 0h6v6H3z" fill="#111"/><path d="M4 2h4v3H4z" fill="#dedede"/><path d="M0 3h6v6H0z" fill="#111"/><path d="M1 5h4v3H1z" fill="#dedede"/></svg></div>
<div class="abs" style="left:3px;top:179px;width:49px;height:21px;background:#f0f0f0;border:1px solid #d9d9d9;border-bottom:none"></div>
<div class="t11" style="left:12px;top:182px;letter-spacing:-0.3px">Model</div>
<div class="abs" style="left:51px;top:176px;width:72px;height:25px;background:#fff;border:1px solid #d9d9d9;border-bottom:none;z-index:2"></div>
<svg class="abs" style="left:64px;top:177px;z-index:3" width="20" height="20" viewBox="0 0 20 20"><path d="M1.200 4.800l3.600-3.600L15 11.600l-3.600 3.600z" fill="#2c4a7c" stroke="#1a2e52" stroke-width="0.600"/><path d="M3 3.200l10.300 10.200" stroke="#4a6ea8" stroke-width="1"/><path d="M15 11.600l1.900 5.400-5.500-1.800z" fill="#f4f4f4" stroke="#555" stroke-width="0.500"/><path d="M16.700 16.800l-0.700-2-1.400 1.300z" fill="#222"/></svg>
<div class="t11" style="left:84px;top:181px;z-index:3;letter-spacing:-0.4px">Tasks</div>
<div class="abs" style="left:3px;top:201px;width:264px;height:548px;background:#f0f0f0;border:1px solid #7a8294;border-right-color:#fff;border-bottom-color:#fff"></div>
<div class="abs" style="left:3px;top:201px;width:263px;height:1px;background:#7a8294;z-index:5"></div><div class="abs" style="left:264px;top:202px;width:1px;height:546px;background:#828a9c;z-index:4"></div><div class="abs" style="left:4px;top:747px;width:261px;height:1px;background:#828a9c;z-index:4"></div>
<div class="abs" id="tp" style="left:4px;top:201px;width:243px;height:546px;overflow:hidden;background:linear-gradient(180deg,#ababc9 0px,#35356a 285px,#35356a 100%)">
<div class="btn" style="left:85.500px;top:19.500px;width:72px;height:20px;line-height:18px;border-color:#b4b4b4">Close</div>
<div class="box" style="left:8px;top:58px;height:158px"><div class="boxhead"><svg class="abs" style="left:8.500px;top:4px" width="16" height="18" viewBox="0 0 16 18"><path d="M1.500 2.500h11v14h-11z" fill="#ececec" stroke="#c2c2c2"/><path d="M1 16.500h12" stroke="#a8a8a8"/><circle cx="12" cy="3.500" r="2.400" fill="#f4ec30"/></svg><b>Solver messages</b><div class="fold"><svg class="abs" style="left:3px;top:2.500px" width="9" height="10" viewBox="0 0 9 10" fill="none" stroke="#1c3c9c" stroke-width="1.5"><path d="M1 4.500l3.500-3.500 3.500 3.500M1 9l3.500-3.500 3.500 3.500"/></svg></div></div><div class="boxbody" style="height:133px">
<div class="t11" style="left:14px;top:14px;font-size:12px;color:#1c961c">Fully constrained sketch</div>
<div class="t11" style="left:14px;top:34px;font-size:12px;color:#1c961c">Solved in 0 sec</div>
<div class="cb" style="left:14px;top:55px"></div><div class="t11" style="left:32px;top:55px;letter-spacing:-0.15px">Auto Remove Redundants</div>
<div class="cb" style="left:14px;top:101px"></div><div class="t11" style="left:32px;top:101px">Auto Update</div>
<div class="btn" style="left:118px;top:97px;width:94px;height:21px;line-height:21px">Update</div>
</div></div>
<div class="box" style="left:8px;top:225px;height:25px"><div class="boxhead"><svg class="abs" style="left:8.500px;top:4px" width="16" height="18" viewBox="0 0 16 18"><path d="M1.500 2.500h11v14h-11z" fill="#ececec" stroke="#c2c2c2"/><path d="M1 16.500h12" stroke="#a8a8a8"/><circle cx="12" cy="3.500" r="2.400" fill="#f4ec30"/></svg><b>Edit controls</b><div class="fold"><svg class="abs" style="left:3px;top:2.500px" width="9" height="10" viewBox="0 0 9 10" fill="none" stroke="#1c3c9c" stroke-width="1.5"><path d="M1 4.500l3.500-3.500 3.500 3.500M1 9l3.500-3.500 3.500 3.500"/></svg></div></div></div>
<div class="box" style="left:8px;top:260px;height:300px"><div class="boxhead"><svg class="abs" style="left:8.500px;top:4px" width="16" height="18" viewBox="0 0 16 18"><path d="M1.500 2.500h11v14h-11z" fill="#ececec" stroke="#c2c2c2"/><path d="M1 16.500h12" stroke="#a8a8a8"/><circle cx="12" cy="3.500" r="2.400" fill="#f4ec30"/></svg><b>Constraints</b><div class="fold"><svg class="abs" style="left:3px;top:2.500px" width="9" height="10" viewBox="0 0 9 10" fill="none" stroke="#1c3c9c" stroke-width="1.5"><path d="M1 4.500l3.500-3.500 3.500 3.500M1 9l3.500-3.500 3.500 3.500"/></svg></div></div><div class="boxbody" style="height:280px">
<div class="t11" style="left:13.500px;top:15.500px">Filter:</div>
<div class="abs" style="left:117px;top:13px;width:96px;height:20px;background:#e1e1e1;border:1px solid #adadad"></div><div class="t11" style="left:121px;top:16px">All</div><div class="dd" style="left:200px;top:21px;border-top-color:#111"></div>
<div class="cb" style="left:14px;top:41px"><svg class="abs" style="left:1px;top:1px" width="9" height="9" viewBox="0 0 9 9" fill="none" stroke="#222" stroke-width="1.2"><path d="M0.800 4.500l2.500 2.700 5-6"/></svg></div><div class="t11" style="left:31px;top:41px">Hide Internal Alignment</div>
<div class="cb" style="left:14px;top:64px"></div><div class="t11" style="left:31px;top:64px">Extended Information</div>
<div class="abs" style="left:14px;top:85px;width:199px;height:200px;background:#fff;border:1px solid #828790;overflow:hidden">
<div class="cb" style="left:4px;top:3.5px;border-color:#444"><svg class="abs" style="left:1px;top:1px" width="9" height="9" viewBox="0 0 9 9" fill="none" stroke="#222" stroke-width="1.2"><path d="M0.800 4.500l2.500 2.700 5-6"/></svg></div><svg class="abs" style="left:22px;top:3.5px" width="18" height="13" viewBox="0 0 18 13" overflow="visible"><circle cx="9" cy="6.500" r="2.300" fill="#d81414"/></svg><div class="t11" style="left:45.500px;top:4px;letter-spacing:0.3px">Constraint1</div>
<div class="cb" style="left:4px;top:21.5px;border-color:#444"><svg class="abs" style="left:1px;top:1px" width="9" height="9" viewBox="0 0 9 9" fill="none" stroke="#222" stroke-width="1.2"><path d="M0.800 4.500l2.500 2.700 5-6"/></svg></div><svg class="abs" style="left:22px;top:21.5px" width="18" height="13" viewBox="0 0 18 13" overflow="visible"><circle cx="9" cy="6.500" r="2.300" fill="#d81414"/></svg><div class="t11" style="left:45.500px;top:22px;letter-spacing:0.3px">Constraint2</div>
<div class="cb" style="left:4px;top:39.5px;border-color:#444"><svg class="abs" style="left:1px;top:1px" width="9" height="9" viewBox="0 0 9 9" fill="none" stroke="#222" stroke-width="1.2"><path d="M0.800 4.500l2.500 2.700 5-6"/></svg></div><svg class="abs" style="left:22px;top:39.5px" width="18" height="13" viewBox="0 0 18 13" overflow="visible"><circle cx="9" cy="6.500" r="2.300" fill="#d81414"/></svg><div class="t11" style="left:45.500px;top:40px;letter-spacing:0.3px">Constraint3</div>
<div class="cb" style="left:4px;top:57.5px;border-color:#444"><svg class="abs" style="left:1px;top:1px" width="9" height="9" viewBox="0 0 9 9" fill="none" stroke="#222" stroke-width="1.2"><path d="M0.800 4.500l2.500 2.700 5-6"/></svg></div><svg class="abs" style="left:22px;top:57.5px" width="18" height="13" viewBox="0 0 18 13" overflow="visible"><circle cx="9" cy="6.500" r="2.300" fill="#d81414"/></svg><div class="t11" style="left:45.500px;top:58px;letter-spacing:0.3px">Constraint4</div>
<div class="cb" style="left:4px;top:75.5px;border-color:#444"><svg class="abs" style="left:1px;top:1px" width="9" height="9" viewBox="0 0 9 9" fill="none" stroke="#222" stroke-width="1.2"><path d="M0.800 4.500l2.500 2.700 5-6"/></svg></div><svg class="abs" style="left:22px;top:75.5px" width="18" height="13" viewBox="0 0 18 13" overflow="visible"><rect x="1" y="5.500" width="15" height="2.500" fill="#d81414"/></svg><div class="t11" style="left:45.500px;top:76px;letter-spacing:0.3px">Constraint5</div>
<div class="cb" style="left:4px;top:93.5px;border-color:#444"><svg class="abs" style="left:1px;top:1px" width="9" height="9" viewBox="0 0 9 9" fill="none" stroke="#222" stroke-width="1.2"><path d="M0.800 4.500l2.500 2.700 5-6"/></svg></div><svg class="abs" style="left:22px;top:93.5px" width="18" height="13" viewBox="0 0 18 13" overflow="visible"><rect x="1" y="5.500" width="15" height="2.500" fill="#d81414"/></svg><div class="t11" style="left:45.500px;top:94px;letter-spacing:0.3px">Constraint6</div>
<div class="cb" style="left:4px;top:111.5px;border-color:#444"><svg class="abs" style="left:1px;top:1px" width="9" height="9" viewBox="0 0 9 9" fill="none" stroke="#222" stroke-width="1.2"><path d="M0.800 4.500l2.500 2.700 5-6"/></svg></div><svg class="abs" style="left:22px;top:111.5px" width="18" height="13" viewBox="0 0 18 13" overflow="visible"><rect x="7.500" y="-1" width="2.500" height="15" fill="#d81414"/></svg><div class="t11" style="left:45.500px;top:112px;letter-spacing:0.3px">Constraint7</div>
<div class="cb" style="left:4px;top:129.5px;border-color:#444"><svg class="abs" style="left:1px;top:1px" width="9" height="9" viewBox="0 0 9 9" fill="none" stroke="#222" stroke-width="1.2"><path d="M0.800 4.500l2.500 2.700 5-6"/></svg></div><svg class="abs" style="left:22px;top:129.5px" width="18" height="13" viewBox="0 0 18 13" overflow="visible"><rect x="7.500" y="-1" width="2.500" height="15" fill="#d81414"/></svg><div class="t11" style="left:45.500px;top:130px;letter-spacing:0.3px">Constraint8</div>
<div class="cb" style="left:4px;top:147.5px;border-color:#444"><svg class="abs" style="left:1px;top:1px" width="9" height="9" viewBox="0 0 9 9" fill="none" stroke="#222" stroke-width="1.2"><path d="M0.800 4.500l2.500 2.700 5-6"/></svg></div><svg class="abs" style="left:22px;top:147.5px" width="18" height="13" viewBox="0 0 18 13" overflow="visible"><path d="M2 2.500v8M15.500 2.500v8M2 6.500h13.500" stroke="#d81414" stroke-width="2.300" fill="none"/></svg><div class="t11" style="left:45.500px;top:148px;letter-spacing:0.3px">Constraint9 (3 mm)</div>
<div class="cb" style="left:4px;top:165.5px;border-color:#444"><svg class="abs" style="left:1px;top:1px" width="9" height="9" viewBox="0 0 9 9" fill="none" stroke="#222" stroke-width="1.2"><path d="M0.800 4.500l2.500 2.700 5-6"/></svg></div><svg class="abs" style="left:22px;top:165.5px" width="18" height="13" viewBox="0 0 18 13" overflow="visible"><path d="M3.500 0h10M3.500 14h10M8.500 0v14" stroke="#d81414" stroke-width="2.200" fill="none"/></svg><div class="t11" style="left:45.500px;top:166px;letter-spacing:0.3px">Constraint10 (8.1 mm)</div>
<div class="abs" style="left:179px;top:0;width:18px;height:200px;background:#f0f0f0"></div><div class="abs" style="left:180px;top:18px;width:15px;height:128px;background:#cdcdcd"></div>
<svg class="abs" style="left:183.500px;top:7px" width="8" height="6" viewBox="0 0 8 6" fill="none" stroke="#505050" stroke-width="1.800"><path d="M0.800 5l3.200-3.400 3.200 3.400"/></svg>
</div>
</div></div>
</div>
<div class="abs" style="left:247px;top:202px;width:17px;height:545px;background:#f0f0f0"></div><div class="abs" style="left:248px;top:219px;width:15px;height:292px;background:#c1c1c1"></div>
<svg class="abs" style="left:251.500px;top:207px" width="8" height="6" viewBox="0 0 8 6" fill="none" stroke="#505050" stroke-width="1.800"><path d="M0.800 5l3.200-3.400 3.200 3.400"/></svg>
<svg class="abs" style="left:251.500px;top:736px" width="8" height="6" viewBox="0 0 8 6" fill="none" stroke="#505050" stroke-width="1.800"><path d="M0.800 1l3.200 3.400 3.200-3.400"/></svg>

<svg class="abs" style="left:273px;top:154px" width="1107" height="574.600" viewBox="273 154 1107 574.600">
<defs><linearGradient id="bg" x1="0" y1="0" x2="0" y2="1"><stop offset="0" stop-color="#333366"/><stop offset="1" stop-color="#9999b2"/></linearGradient><linearGradient id="nc" x1="0" y1="0" x2="0" y2="1"><stop offset="0" stop-color="#e4e8f2"/><stop offset="1" stop-color="#dfe3ee"/></linearGradient></defs>
<rect x="273" y="154" width="1107" height="574.600" fill="url(#bg)"/>
<path d="M379.8 154V729" stroke="#2f8cf2" stroke-width="2.200"/><path d="M379.8 152V729" stroke="#c4cad8" stroke-width="1.400" stroke-dasharray="3.700 4.500"/>
<path d="M1223.5 154V729" stroke="#2f8cf2" stroke-width="2.200"/><path d="M1223.5 152V729" stroke="#c4cad8" stroke-width="1.400" stroke-dasharray="3.700 4.500"/>
<path d="M548 248.500H1055A21 21 0 0 1 1076 269.500V623.500A21 21 0 0 1 1055 644.500H659A33.500 33.500 0 0 0 592 644.500H548A944 944 0 0 1 548 248.500ZM565.500 393.300H594C602 393.300 607 399 607 408A37 37 0 0 1 607 482C607 492 602 499.200 594 499.200H565.500A12.500 12.500 0 0 1 553 486.700V405.800A12.500 12.500 0 0 1 565.500 393.300Z" fill="#0a52ff" fill-rule="evenodd" stroke="#0e0e22" stroke-width="2" stroke-linejoin="round"/>
<rect x="693" y="338.500" width="211" height="211" fill="#303030" stroke="#0c0c0c" stroke-width="1.2"/>
<circle cx="717.500" cy="364" r="10" fill="#bab5a6" stroke="#4a4a48" stroke-width="1"/>
<rect x="612.5" y="286.0" width="43" height="21.5" fill="#15160f" stroke="#0a0a0a" stroke-width="1.2"/><rect x="618.0" y="288.5" width="32" height="16.5" fill="#10c414"/><rect x="614.3" y="288.2" width="2.500" height="6" rx="1" fill="#ece480"/><rect x="651.2" y="288.2" width="2.500" height="6" rx="1" fill="#ece480"/><rect x="614.3" y="299.3" width="2.500" height="6" rx="1" fill="#ece480"/><rect x="651.2" y="299.3" width="2.500" height="6" rx="1" fill="#ece480"/><path d="M611.8 294.25l3 2.500-3 2.500zM656.2 294.25l-3 2.500 3 2.500z" fill="#0a52ff"/>
<rect x="612.5" y="573.0" width="43" height="21.5" fill="#15160f" stroke="#0a0a0a" stroke-width="1.2"/><rect x="618.0" y="575.5" width="32" height="16.5" fill="#10c414"/><rect x="614.3" y="575.2" width="2.500" height="6" rx="1" fill="#ece480"/><rect x="651.2" y="575.2" width="2.500" height="6" rx="1" fill="#ece480"/><rect x="614.3" y="586.3" width="2.500" height="6" rx="1" fill="#ece480"/><rect x="651.2" y="586.3" width="2.500" height="6" rx="1" fill="#ece480"/><path d="M611.8 581.25l3 2.500-3 2.500zM656.2 581.25l-3 2.500 3 2.500z" fill="#0a52ff"/>
<rect x="612.5" y="340.5" width="43" height="21.5" fill="#222427" stroke="#0a0a0a" stroke-width="1.2"/><rect x="615.0" y="342.0" width="4.500" height="18.5" fill="#e2dfd0"/><rect x="648.5" y="342.0" width="4.500" height="18.5" fill="#e2dfd0"/>
<rect x="612.5" y="518.5" width="43" height="21.5" fill="#222427" stroke="#0a0a0a" stroke-width="1.2"/><rect x="615.0" y="520.0" width="4.500" height="18.5" fill="#e2dfd0"/><rect x="648.5" y="520.0" width="4.500" height="18.5" fill="#e2dfd0"/>
<rect x="949.0" y="330.5" width="43" height="21.5" fill="#222427" stroke="#0a0a0a" stroke-width="1.2"/><rect x="951.5" y="332.0" width="4.500" height="18.5" fill="#e2dfd0"/><rect x="985.0" y="332.0" width="4.500" height="18.5" fill="#e2dfd0"/>
<rect x="949.0" y="385.5" width="43" height="21.5" fill="#222427" stroke="#0a0a0a" stroke-width="1.2"/><rect x="951.5" y="387.0" width="4.500" height="18.5" fill="#e2dfd0"/><rect x="985.0" y="387.0" width="4.500" height="18.5" fill="#e2dfd0"/>
<rect x="956.5" y="438.0" width="43" height="22" fill="#e4e1d6" stroke="#0a0a0a" stroke-width="1.2"/><rect x="964.5" y="439.2" width="27" height="19.6" fill="#70503f" stroke="#3a2a20" stroke-width="0.8"/>
<rect x="956.5" y="489.0" width="43" height="22" fill="#e4e1d6" stroke="#0a0a0a" stroke-width="1.2"/><rect x="964.5" y="490.2" width="27" height="19.6" fill="#70503f" stroke="#3a2a20" stroke-width="0.8"/>
<rect x="956.5" y="539.5" width="43" height="22" fill="#e4e1d6" stroke="#0a0a0a" stroke-width="1.2"/><rect x="964.5" y="540.7" width="27" height="19.6" fill="#70503f" stroke="#3a2a20" stroke-width="0.8"/>
<text transform="translate(1215 433) scale(-1 1)" font-family="Liberation Serif,serif" font-size="47" fill="#0a0a0a" textLength="138" lengthAdjust="spacingAndGlyphs">X_Axis</text>
<path d="M273 446.500H380M1223.500 446.500H1380" stroke="#d8524a" stroke-width="2.200"/><path d="M273 446.500H380M1223.500 446.500H1380" stroke="#e4d8d8" stroke-width="1.200" stroke-dasharray="4.500 3.500"/>
<path d="M380 446.500H1223.500M801.500 154V729" stroke="#2f8cf2" stroke-width="2.300"/>
<rect x="548.500" y="269" width="126.500" height="342.500" fill="none" stroke="#00fa10" stroke-width="3"/>
<circle cx="548.5" cy="269" r="3.600" fill="#14f014"/>
<circle cx="675" cy="269" r="3.600" fill="#14f014"/>
<circle cx="548.5" cy="611.5" r="3.600" fill="#14f014"/>
<circle cx="675" cy="611.5" r="3.600" fill="#14f014"/>
<path d="M675 186V269M675 212H705M770 212H801M675 269H758M732 269V314M732 402V446M605.500 269V395M605.500 484V611M548.500 581H578M645 581H675M604 256H618M604 626H618M534 434V446M688.700 434V446" fill="none" stroke="#ff2600" stroke-width="1.900"/>
<path d="M548.500 269H631.500M548.500 611H631.500M548.500 555V611M675 555V611" fill="none" stroke="#ff2a00" stroke-width="1.200"/>
<path d="M801.500 186V446.500H705" fill="none" stroke="#ff2600" stroke-width="2.400" stroke-dasharray="9 3 2 3"/>
<path d="M675 212l12 -6v12z" fill="#ff2600"/><path d="M801 212l-12 -6v12z" fill="#ff2600"/><path d="M732 269.5l-6 12h12z" fill="#ff2600"/><path d="M732 446l-6 -12h12z" fill="#ff2600"/><path d="M605.5 269.5l-6 12h12z" fill="#ff2600"/><path d="M605.5 611l-6 -12h12z" fill="#ff2600"/><path d="M549 581l12 -6v12z" fill="#ff2600"/><path d="M675 581l-12 -6v12z" fill="#ff2600"/>
<text x="711.500" y="220.500" font-family="Liberation Sans,sans-serif" font-size="23" fill="#ff2600" textLength="53" lengthAdjust="spacingAndGlyphs">3 mm</text>
<text x="583.500" y="589.500" font-family="Liberation Sans,sans-serif" font-size="23" fill="#ff2600" textLength="53" lengthAdjust="spacingAndGlyphs">3 mm</text>
<text transform="translate(723.500 321.500) rotate(90)" font-family="Liberation Sans,sans-serif" font-size="23" fill="#ff2600" textLength="72.500" lengthAdjust="spacingAndGlyphs">4.2 mm</text>
<text transform="translate(597 404) rotate(90)" font-family="Liberation Sans,sans-serif" font-size="23" fill="#ff2600" textLength="72" lengthAdjust="spacingAndGlyphs">8.1 mm</text>
<path d="M1071 184.5l9 9m0-9l-9 9M1071 202.5l9 9m0-9l-9 9" stroke="#fff" stroke-width="1.100" fill="none"/><path d="M1075.500 188v19" stroke="#fff" stroke-width="2" fill="none"/>
<text x="1078" y="198" font-family="Liberation Serif,serif" font-size="18.500" fill="#fff" stroke="#fff" stroke-width="0.350" textLength="63" lengthAdjust="spacingAndGlyphs">0.40 mm</text>
<path d="M1071 681.5l9 9m0-9l-9 9M1071 699.5l9 9m0-9l-9 9" stroke="#fff" stroke-width="1.100" fill="none"/><path d="M1075.500 685v19" stroke="#fff" stroke-width="2" fill="none"/>
<text x="1078" y="695" font-family="Liberation Serif,serif" font-size="18.500" fill="#fff" stroke="#fff" stroke-width="0.350" textLength="63" lengthAdjust="spacingAndGlyphs">0.40 mm</text>
<path d="M1288 170.500l9-9 9 9zM1288 302.500l9 9 9-9zM1231.500 228l-9 9 9 9zM1362.500 228l9 9-9 9z" fill="#e6eaf2"/>
<path d="M1274 167.500l2 5.500c-11 3.500-19 9-25 17l4 3-12.500 2 1.500-12.500 3.500 3.500c7-9 16-15 26.500-18.500zM1320 167.500l-2 5.500c11 3.500 19 9 25 17l-4 3 12.500 2-1.500-12.500-3.500 3.500c-7-9-16-15-26.500-18.500z" fill="#e6eaf2"/>
<rect x="1259.500" y="199" width="75" height="75.500" rx="17" fill="#dde2ee"/>
<path d="M1263 212l9-9 4 8-5 5zM1331 212l-9-9-4 8 5 5zM1263 262l9 9 4-8-5-5zM1331 262l-9 9-4-8 5-5z" fill="#eef1f8"/>
<rect x="1267.500" y="207" width="59" height="59.500" rx="9" fill="#eceff6"/>
<rect x="1271.500" y="211" width="51" height="51.500" rx="3" fill="#fafbfd" stroke="#cfd3e4" stroke-width="0.8"/>
<circle cx="1275" cy="214.5" r="3.800" fill="#fbfcfe"/>
<circle cx="1319" cy="214.5" r="3.800" fill="#fbfcfe"/>
<circle cx="1275" cy="259" r="3.800" fill="#fbfcfe"/>
<circle cx="1319" cy="259" r="3.800" fill="#fbfcfe"/>
<path d="M1334.800 199V275" stroke="#18e018" stroke-width="1.200"/><path d="M1259 275H1334.800" stroke="#e81830" stroke-width="1.300"/><path d="M1323 263l11 11" stroke="#2030e0" stroke-width="0.900" opacity="0.8"/>
<path d="M1256.500 273.500l5 5m0-5l-5 5" stroke="#e81818" stroke-width="1.1"/>
<text transform="translate(1297 237) rotate(180)" text-anchor="middle" y="6.500" font-family="Liberation Sans,sans-serif" font-size="19" fill="#111">Bottom</text>
<path d="M1324 289l11-5 11 5v13l-11 4.500-11-4.500z" fill="#dcdcdc"/><path d="M1324 289l11 4.500 11-4.500-11-5z" fill="#f4f4f4"/><path d="M1335 293.500v13l11-4.500v-13z" fill="#c6c6c6"/>
<path d="M1350 291.500h14l-7 7.500z" fill="#3c3c3c"/>
<path d="M1351.500 682V700" stroke="#1f8a1f" stroke-width="1.700"/><path d="M1351.500 680l-2.300 6.500h4.600z" fill="#1f8a1f"/><path d="M1332 699.500H1352" stroke="#9c1c1c" stroke-width="1.700"/><path d="M1334 699.500l5-1.800v3.600z" fill="#9c1c1c"/><rect x="1350.800" y="699" width="1.600" height="1.600" fill="#3030a0"/>
<text x="1353.500" y="679.800" font-family="Liberation Sans,sans-serif" font-size="9.500" fill="#000">Y</text><text x="1353.500" y="700" font-family="Liberation Sans,sans-serif" font-size="9.500" fill="#000">Z</text><text x="1333.500" y="699.800" font-family="Liberation Sans,sans-serif" font-size="9.500" fill="#000">X</text>
</svg>

<div class="abs" style="left:1380px;top:154px;width:65px;height:600px;background:#f0f0f0"></div>
<div class="docktitle" style="left:1384px;top:155px;width:62px;height:19px"><span class="abs" style="left:0px;top:2px;letter-spacing:-0.2px">kicad ...</span><svg class="abs" style="left:46px;top:4.500px" width="9" height="9" viewBox="0 0 9 9" shape-rendering="crispEdges"><path d="M3 0h6v6H3z" fill="#111"/><path d="M4 2h4v3H4z" fill="#dedede"/><path d="M0 3h6v6H0z" fill="#111"/><path d="M1 5h4v3H1z" fill="#dedede"/></svg></div>
<div class="btn" style="left:1392px;top:181px;width:26px;height:26px"><svg class="abs" style="left:5px;top:5px" width="15" height="15" viewBox="0 0 15 15"><path d="M13.500 1v13L1.500 7.500z" fill="#8a8a8a"/></svg></div>
<div class="btn" style="left:1424px;top:181px;width:26px;height:26px"><div class="abs" style="left:5px;top:3px;width:20px;height:15px;background:linear-gradient(135deg,#fff,#d8d8d8);box-shadow:2px 2px 2px #777"></div></div>
<div class="inp" style="left:1389px;top:220px;width:60px;height:20px"><span class="abs" style="right:3.500px;top:3px;line-height:14px">90</span></div>
<div class="inp" style="left:1389px;top:261px;width:60px;height:20px"><span class="abs" style="right:3.500px;top:3px;line-height:14px">90</span></div>
<div class="inp" style="left:1389px;top:302px;width:60px;height:20px"><span class="abs" style="right:3.500px;top:3px;line-height:14px">90</span></div>
<div class="inp" style="left:1389px;top:340px;width:60px;height:20px"><span class="abs" style="right:3.500px;top:3px;line-height:14px">0.10</span></div>
<div class="inp" style="left:1389px;top:381px;width:60px;height:20px"><span class="abs" style="right:3.500px;top:3px;line-height:14px">0.10</span></div>
<div class="inp" style="left:1389px;top:422px;width:60px;height:20px"><span class="abs" style="right:3.500px;top:3px;line-height:14px">0.10</span></div>
<div class="btn" style="left:1389px;top:457px;width:60px;height:34px;border-color:#b8b8b8;background:#e3e3e3"><svg class="abs" style="left:11px;top:2px" width="34" height="30" viewBox="0 0 34 30"><rect x="7" y="8" width="20" height="13" rx="1.500" fill="#fff" stroke="#999" stroke-width="0.8"/><path d="M7 12.500l2 2-2 2" fill="none" stroke="#999" stroke-width="0.8"/><rect x="11" y="3.5" width="3.800" height="5" fill="#18b838"/><rect x="11" y="20.5" width="3.800" height="5" fill="#18b838"/><rect x="17.5" y="20.5" width="3.800" height="5" fill="#18b838"/><rect x="24" y="3.5" width="3.800" height="5" fill="#18b838"/><rect x="24" y="20.5" width="3.800" height="5" fill="#18b838"/><path transform="translate(4 0.500) scale(1.350 1)" d="M0 2c5-2 10 0 12 5l2.500-1-1.500 7-6.500-3 2.500-1C7 6 4 5 0 5.500z" fill="#5cc83a" stroke="#1e6a14" stroke-width="0.8" stroke-linejoin="round"/></svg></div>
<div class="btn" style="left:1389px;top:496px;width:60px;height:34px;border-color:#b8b8b8;background:#e3e3e3"><svg class="abs" style="left:11px;top:2px" width="34" height="30" viewBox="0 0 34 30"><rect x="6" y="5" width="24" height="14" fill="#555" stroke="#222" stroke-width="0.8"/><rect x="8" y="1.500" width="4.500" height="4" fill="#ccc" stroke="#333" stroke-width="0.7"/><rect x="15" y="1.500" width="4.500" height="4" fill="#ccc" stroke="#333" stroke-width="0.7"/><rect x="22" y="1.500" width="4.500" height="4" fill="#ccc" stroke="#333" stroke-width="0.7"/><path d="M18 8l8-1.500 5 2.500v9l-5 2-8-2z" fill="#2a6ac8" stroke="#143a7a" stroke-width="0.7"/><path d="M26 11v9l5-2V9z" fill="#1c4c98"/><path transform="translate(7 15.500) rotate(5) scale(1.500 0.950)" d="M0 2c5-2 10 0 12 5l2.500-1-1.500 7-6.500-3 2.500-1C7 6 4 5 0 5.500z" fill="#5cc83a" stroke="#1e6a14" stroke-width="0.8" stroke-linejoin="round"/></svg></div>
<div class="btn" style="left:1389px;top:534px;width:60px;height:34px;border-color:#b8b8b8;background:#e3e3e3"><svg class="abs" style="left:11px;top:2px" width="34" height="30" viewBox="0 0 34 30"><path d="M3 17l14-7 14 5v6l-13 7-15-5z" fill="#f0c010" stroke="#8a6a00" stroke-width="0.9" stroke-linejoin="round"/><path d="M3 17l15 5 13-7M18 22v6" fill="none" stroke="#8a6a00" stroke-width="0.9"/><path d="M3 17l14-7 14 5-13 7z" fill="#f8d838"/><path d="M15 14l7-2.500 5 2-7 3z" fill="#fbe680" stroke="#b89000" stroke-width="0.7"/><path d="M8 16l3-1 2 1-3 1z" fill="#fbe680" stroke="#b89000" stroke-width="0.6"/><path transform="translate(1 -0.500) scale(1.250 0.950)" d="M0 2c5-2 10 0 12 5l2.500-1-1.500 7-6.500-3 2.500-1C7 6 4 5 0 5.500z" fill="#5cc83a" stroke="#1e6a14" stroke-width="0.8" stroke-linejoin="round"/></svg></div>
<div class="btn" style="left:1389px;top:573px;width:60px;height:34px;border-color:#b8b8b8;background:#e3e3e3"><svg class="abs" style="left:11px;top:2px" width="34" height="30" viewBox="0 0 34 30"><path d="M8 6v15c0 4 18 4 18 0V6" fill="#f2d21a" stroke="#8a7000" stroke-width="0.9"/><ellipse cx="17" cy="6" rx="9" ry="3.500" fill="#f8e060" stroke="#8a7000" stroke-width="0.9"/><path transform="translate(10 15.500) rotate(5) scale(1.350 0.950)" d="M0 2c5-2 10 0 12 5l2.500-1-1.500 7-6.500-3 2.500-1C7 6 4 5 0 5.500z" fill="#5cc83a" stroke="#1e6a14" stroke-width="0.8" stroke-linejoin="round"/></svg></div>
<div class="btn" style="left:1389px;top:611px;width:60px;height:34px;border-color:#b8b8b8;background:#e3e3e3"><svg class="abs" style="left:11px;top:2px" width="34" height="30" viewBox="0 0 34 30"><rect x="5.500" y="2.500" width="23" height="24" fill="#f6f6f6" stroke="#c8c8c8"/><path d="M8 5h18" stroke="#ddd" stroke-width="1.5"/><path d="M9 10l5-3.500 12 12-1.500 3.500-3.500 1z" fill="#e8c020" stroke="#6a5000" stroke-width="0.8"/><path d="M11 9l12 12M12.500 8l12 12" stroke="#8a6a00" stroke-width="0.8"/><path d="M21 21l4 2.500 1-4.500" fill="#f0e0c0" stroke="#554" stroke-width="0.6"/><path d="M24 22.500l2 1.500-0.500-2.500z" fill="#222"/></svg></div>

<div class="abs" style="left:273px;top:728px;width:1107px;height:27px;background:#f0f0f0"></div>
<div class="abs" style="left:275px;top:729px;width:113px;height:21px;background:#f0f0f0;border:1px solid #d9d9d9;border-top:none"></div>
<svg class="abs" style="left:283px;top:730px" width="19" height="17" viewBox="0 0 19 17"><path d="M2.400 0.500h8.400v3.100H5.800v2.700h3.200v2.600H5.800v6.600H2.400z" fill="#e01a1a" stroke="#8a0e0e" stroke-width="0.600" stroke-linejoin="round"/><path d="M12.10 4.30L13.52 6.58L16.13 5.97L15.52 8.58L17.80 10.00L15.52 11.42L16.13 14.03L13.52 13.42L12.10 15.70L10.68 13.42L8.07 14.03L8.68 11.42L6.40 10.00L8.68 8.58L8.07 5.97L10.68 6.58z" fill="#3f73b6" stroke="#234a86" stroke-width="0.600" stroke-linejoin="round"/><circle cx="12.100" cy="10" r="1.500" fill="#fff"/></svg>
<div class="t11" style="left:304.3px;top:732px">Start page</div>
<svg class="abs" style="left:360px;top:732px" width="14" height="14" viewBox="0 0 14 14"><rect x="0.500" y="0.500" width="13" height="13" rx="2" fill="#cfcfcf" stroke="#b4b4b4"/><path d="M4 4l6 6M10 4l-6 6" stroke="#fff" stroke-width="1.800"/></svg>
<div class="abs" style="left:388px;top:729px;width:154px;height:21px;background:#f0f0f0;border:1px solid #d9d9d9;border-top:none"></div>
<svg class="abs" style="left:398px;top:730px" width="19" height="17" viewBox="0 0 19 17"><path d="M2.400 0.500h8.400v3.100H5.800v2.700h3.200v2.600H5.800v6.600H2.400z" fill="#e01a1a" stroke="#8a0e0e" stroke-width="0.600" stroke-linejoin="round"/><path d="M12.10 4.30L13.52 6.58L16.13 5.97L15.52 8.58L17.80 10.00L15.52 11.42L16.13 14.03L13.52 13.42L12.10 15.70L10.68 13.42L8.07 14.03L8.68 11.42L6.40 10.00L8.68 8.58L8.07 5.97L10.68 6.58z" fill="#3f73b6" stroke="#234a86" stroke-width="0.600" stroke-linejoin="round"/><circle cx="12.100" cy="10" r="1.500" fill="#fff"/></svg>
<div class="t11" style="left:419.4px;top:732px">Doorbell Holder : 1</div>
<svg class="abs" style="left:514px;top:732px" width="14" height="14" viewBox="0 0 14 14"><rect x="0.500" y="0.500" width="13" height="13" rx="2" fill="#cfcfcf" stroke="#b4b4b4"/><path d="M4 4l6 6M10 4l-6 6" stroke="#fff" stroke-width="1.800"/></svg>
<div class="abs" style="left:542px;top:729px;width:135px;height:21px;background:#f0f0f0;border:1px solid #d9d9d9;border-top:none"></div>
<svg class="abs" style="left:551.5px;top:730px" width="19" height="17" viewBox="0 0 19 17"><path d="M2.400 0.500h8.400v3.100H5.800v2.700h3.200v2.600H5.800v6.600H2.400z" fill="#e01a1a" stroke="#8a0e0e" stroke-width="0.600" stroke-linejoin="round"/><path d="M12.10 4.30L13.52 6.58L16.13 5.97L15.52 8.58L17.80 10.00L15.52 11.42L16.13 14.03L13.52 13.42L12.10 15.70L10.68 13.42L8.07 14.03L8.68 11.42L6.40 10.00L8.68 8.58L8.07 5.97L10.68 6.58z" fill="#3f73b6" stroke="#234a86" stroke-width="0.600" stroke-linejoin="round"/><circle cx="12.100" cy="10" r="1.500" fill="#fff"/></svg>
<div class="t11" style="left:572.7px;top:732px">Unnamed1 : 1*</div>
<svg class="abs" style="left:649px;top:732px" width="14" height="14" viewBox="0 0 14 14"><rect x="0.500" y="0.500" width="13" height="13" rx="2" fill="#cfcfcf" stroke="#b4b4b4"/><path d="M4 4l6 6M10 4l-6 6" stroke="#fff" stroke-width="1.800"/></svg>
<div class="abs" style="left:677px;top:728px;width:161px;height:24px;background:#fff;border:1px solid #d9d9d9;border-top:none"></div>
<svg class="abs" style="left:688px;top:731px" width="19" height="17" viewBox="0 0 19 17"><path d="M2.400 0.500h8.400v3.100H5.800v2.700h3.200v2.600H5.800v6.600H2.400z" fill="#e01a1a" stroke="#8a0e0e" stroke-width="0.600" stroke-linejoin="round"/><path d="M12.10 4.30L13.52 6.58L16.13 5.97L15.52 8.58L17.80 10.00L15.52 11.42L16.13 14.03L13.52 13.42L12.10 15.70L10.68 13.42L8.07 14.03L8.68 11.42L6.40 10.00L8.68 8.58L8.07 5.97L10.68 6.58z" fill="#3f73b6" stroke="#234a86" stroke-width="0.600" stroke-linejoin="round"/><circle cx="12.100" cy="10" r="1.500" fill="#fff"/></svg>
<div class="t11" style="left:710px;top:733px">tomu_0.4_case : 1*</div>
<svg class="abs" style="left:811px;top:733px" width="14" height="14" viewBox="0 0 14 14"><rect x="0.500" y="0.500" width="13" height="13" rx="2" fill="#e8583a" stroke="#b83a20"/><path d="M4 4l6 6M10 4l-6 6" stroke="#fff" stroke-width="1.800"/></svg>
<div class="docktitle" style="left:1px;top:757px;width:1443px;height:19px"><span class="abs" style="left:1px;top:2px;letter-spacing:-0.2px">Python console</span><svg class="abs" style="left:1412px;top:4.500px" width="9" height="9" viewBox="0 0 9 9" shape-rendering="crispEdges"><path d="M3 0h6v6H3z" fill="#111"/><path d="M4 2h4v3H4z" fill="#dedede"/><path d="M0 3h6v6H0z" fill="#111"/><path d="M1 5h4v3H1z" fill="#dedede"/></svg><svg class="abs" style="left:1429px;top:5px" width="8" height="8" viewBox="0 0 8 8" fill="none" stroke="#111" stroke-width="1.700"><path d="M0.700 0.700l6.600 6.600M7.300 0.700l-6.600 6.600"/></svg></div>
<div class="abs" style="left:1px;top:778px;width:1443px;height:104px;background:#fff;border:1px solid #828790;border-top:2px solid #828790"></div>
<div class="mono" style="top:780px"><i>&gt;&gt;&gt;</i> <b>if</b> ActiveSketch<i>.</i>ViewObject<i>.</i>RestoreCamera<i>:</i></div>
<div class="mono" style="top:796px"><i>&gt;&gt;&gt;</i>   ActiveSketch<i>.</i>ViewObject<i>.</i>TempoVis<i>.</i>saveCamera<i>()</i></div>
<div class="mono" style="top:812px"><i>&gt;&gt;&gt;</i> </div>
<div class="mono" style="top:828px"><i>&gt;&gt;&gt;</i> Gui<i>.</i>activeDocument<i>().</i>activeView<i>().</i>viewBottom<i>()</i></div>
<div class="mono" style="top:844px"><i>&gt;&gt;&gt;</i> Gui<i>.</i>getDocument<i>(</i><u>"tomu_0_4_case"</u><i>).</i>getObject<i>(</i><u>"Pocket002"</u><i>).</i>Visibility<i>=</i>False</div>
<div class="mono" style="top:860px"><i>&gt;&gt;&gt;</i> </div>
<div class="abs" style="left:1426px;top:780px;width:17px;height:100px;background:#f0f0f0"></div><div class="abs" style="left:1427px;top:846px;width:15px;height:18px;background:#cdcdcd"></div>
<svg class="abs" style="left:1430.500px;top:785px" width="8" height="6" viewBox="0 0 8 6" fill="none" stroke="#505050" stroke-width="1.800"><path d="M0.800 5l3.200-3.400 3.200 3.400"/></svg>
<svg class="abs" style="left:1430.500px;top:869.500px" width="8" height="6" viewBox="0 0 8 6" fill="none" stroke="#505050" stroke-width="1.800"><path d="M0.800 1l3.200 3.400 3.200-3.400"/></svg>
<div class="abs" style="left:0;top:881px;width:1445px;height:31px;background:#f0f0f0"></div>
<div class="abs" id="status" style="left:7px;top:890px;font-size:12px;line-height:15px;white-space:nowrap;letter-spacing:-0.5px">Preselected: tomu_0_4_case.XZ_Plane. (7.959652,0.000001,-10.000001)</div>
<svg class="abs" style="left:1241px;top:890px" width="10" height="15" viewBox="0 0 10 15" fill="none" stroke="#222" stroke-width="1.300"><rect x="1" y="1" width="8" height="13" rx="3.500"/><path d="M5 3.500v3"/></svg>
<div class="abs" style="left:1258px;top:890px;font-size:12px;line-height:15px;letter-spacing:-0.3px">CAD</div><div class="dd" style="left:1284px;top:896px"></div>
<div class="abs" style="left:1299px;top:884px;width:1px;height:25px;background:#d4d4d4"></div>
<div class="abs" id="dims" style="left:1304px;top:890px;font-size:12px;line-height:15px;white-space:nowrap;letter-spacing:-0.3px">26.24 mm x 13.61 mm</div>
<div class="abs" style="left:1425px;top:884px;width:1px;height:24px;background:#d4d4d4"></div>
<svg class="abs" style="left:1432.500px;top:900px" width="9.500" height="9.500" viewBox="0 0 12 12" fill="#b4b4b4"><rect x="9" y="1" width="2" height="2"/><rect x="5" y="5" width="2" height="2"/><rect x="9" y="5" width="2" height="2"/><rect x="1" y="9" width="2" height="2"/><rect x="5" y="9" width="2" height="2"/><rect x="9" y="9" width="2" height="2"/></svg>

<div id="frame"></div>
</div>
</body>
</html>
